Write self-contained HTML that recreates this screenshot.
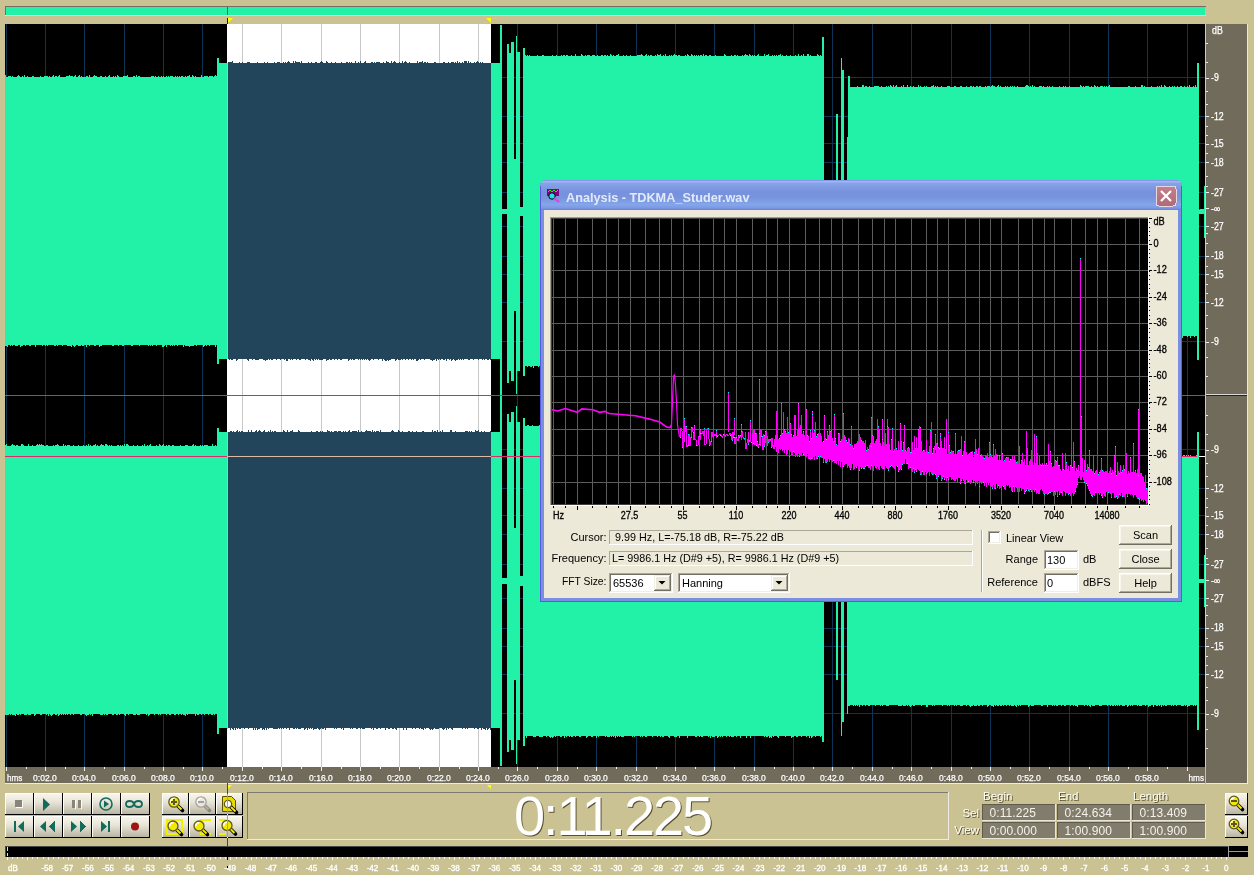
<!DOCTYPE html>
<html><head><meta charset="utf-8"><style>
html,body{margin:0;padding:0;width:1254px;height:875px;overflow:hidden;background:#CAC292;}
svg{position:absolute;left:0;top:0;font-family:"Liberation Sans",sans-serif;will-change:transform;}
</style></head><body>
<svg width="1254" height="875" viewBox="0 0 1254 875" shape-rendering="crispEdges">
<rect x="5" y="6" width="1201" height="1" fill="#7B6A62"/>
<rect x="5" y="6" width="1" height="10" fill="#7B6A62"/>
<rect x="6" y="7" width="1199" height="8" fill="#22F2A8"/>
<rect x="5" y="15" width="1201" height="1" fill="#E2E4E6"/>
<rect x="227" y="7" width="1" height="8" fill="#D0205A"/>
<rect x="227" y="18" width="1" height="6" fill="#0000FF"/>
<polygon shape-rendering="geometricPrecision" points="228,18 233,18 228,23" fill="#FFFF00"/>
<polygon shape-rendering="geometricPrecision" points="486,18 491,18 491,23" fill="#FFFF00"/>
<rect x="5" y="24" width="1200" height="743" fill="#000"/>
<rect x="227" y="24" width="264" height="743" fill="#FFFFFF"/>
<rect x="6" y="24" width="1" height="743" fill="#0F3352"/>
<rect x="45" y="24" width="1" height="743" fill="#0F3352"/>
<rect x="84" y="24" width="1" height="743" fill="#0F3352"/>
<rect x="124" y="24" width="1" height="743" fill="#0F3352"/>
<rect x="163" y="24" width="1" height="743" fill="#0F3352"/>
<rect x="202" y="24" width="1" height="743" fill="#0F3352"/>
<rect x="242" y="24" width="1" height="743" fill="#C8C8C8"/>
<rect x="281" y="24" width="1" height="743" fill="#C8C8C8"/>
<rect x="321" y="24" width="1" height="743" fill="#C8C8C8"/>
<rect x="360" y="24" width="1" height="743" fill="#C8C8C8"/>
<rect x="399" y="24" width="1" height="743" fill="#C8C8C8"/>
<rect x="439" y="24" width="1" height="743" fill="#C8C8C8"/>
<rect x="478" y="24" width="1" height="743" fill="#C8C8C8"/>
<rect x="517" y="24" width="1" height="743" fill="#0F3352"/>
<rect x="557" y="24" width="1" height="743" fill="#0F3352"/>
<rect x="596" y="24" width="1" height="743" fill="#0F3352"/>
<rect x="636" y="24" width="1" height="743" fill="#0F3352"/>
<rect x="675" y="24" width="1" height="743" fill="#0F3352"/>
<rect x="714" y="24" width="1" height="743" fill="#0F3352"/>
<rect x="754" y="24" width="1" height="743" fill="#0F3352"/>
<rect x="793" y="24" width="1" height="743" fill="#0F3352"/>
<rect x="832" y="24" width="1" height="743" fill="#0F3352"/>
<rect x="872" y="24" width="1" height="743" fill="#0F3352"/>
<rect x="911" y="24" width="1" height="743" fill="#0F3352"/>
<rect x="951" y="24" width="1" height="743" fill="#0F3352"/>
<rect x="990" y="24" width="1" height="743" fill="#0F3352"/>
<rect x="1029" y="24" width="1" height="743" fill="#0F3352"/>
<rect x="1069" y="24" width="1" height="743" fill="#0F3352"/>
<rect x="1108" y="24" width="1" height="743" fill="#0F3352"/>
<rect x="1147" y="24" width="1" height="743" fill="#0F3352"/>
<rect x="1187" y="24" width="1" height="743" fill="#0F3352"/>
<rect x="5" y="77" width="1200" height="1" fill="#0F3352"/>
<rect x="5" y="116" width="1200" height="1" fill="#0F3352"/>
<rect x="5" y="143" width="1200" height="1" fill="#0F3352"/>
<rect x="5" y="162" width="1200" height="1" fill="#0F3352"/>
<rect x="5" y="192" width="1200" height="1" fill="#0F3352"/>
<rect x="5" y="226" width="1200" height="1" fill="#0F3352"/>
<rect x="5" y="256" width="1200" height="1" fill="#0F3352"/>
<rect x="5" y="274" width="1200" height="1" fill="#0F3352"/>
<rect x="5" y="302" width="1200" height="1" fill="#0F3352"/>
<rect x="5" y="341" width="1200" height="1" fill="#0F3352"/>
<rect x="5" y="449" width="1200" height="1" fill="#0F3352"/>
<rect x="5" y="488" width="1200" height="1" fill="#0F3352"/>
<rect x="5" y="515" width="1200" height="1" fill="#0F3352"/>
<rect x="5" y="534" width="1200" height="1" fill="#0F3352"/>
<rect x="5" y="564" width="1200" height="1" fill="#0F3352"/>
<rect x="5" y="598" width="1200" height="1" fill="#0F3352"/>
<rect x="5" y="628" width="1200" height="1" fill="#0F3352"/>
<rect x="5" y="646" width="1200" height="1" fill="#0F3352"/>
<rect x="5" y="674" width="1200" height="1" fill="#0F3352"/>
<rect x="5" y="713" width="1200" height="1" fill="#0F3352"/>
<rect x="5" y="77" width="212" height="268" fill="#22F2A8"/>
<rect x="217" y="58" width="2" height="306" fill="#22F2A8"/>
<rect x="219" y="63" width="8" height="296" fill="#22F2A8"/>
<rect x="227" y="63" width="264" height="296" fill="#23455C"/>
<rect x="491" y="63" width="9" height="296" fill="#22F2A8"/>
<rect x="500" y="25" width="2" height="372" fill="#22F2A8"/>
<rect x="502" y="209" width="5" height="5" fill="#22F2A8"/>
<rect x="507" y="44" width="2" height="339" fill="#22F2A8"/>
<rect x="509" y="53" width="2" height="318" fill="#22F2A8"/>
<rect x="511" y="42" width="3" height="339" fill="#22F2A8"/>
<rect x="516" y="52" width="4" height="319" fill="#22F2A8"/>
<rect x="514" y="159" width="2" height="152" fill="#22F2A8"/>
<rect x="516" y="36" width="1" height="358" fill="#22F2A8"/>
<rect x="520" y="207" width="3" height="9" fill="#22F2A8"/>
<rect x="523" y="48" width="2" height="328" fill="#22F2A8"/>
<rect x="525" y="56" width="298" height="310" fill="#22F2A8"/>
<rect x="822" y="37" width="2" height="336" fill="#22F2A8"/>
<rect x="836" y="114" width="2" height="197" fill="#22F2A8"/>
<rect x="841" y="58" width="1" height="308" fill="#22F2A8"/>
<rect x="842" y="70" width="2" height="282" fill="#22F2A8"/>
<rect x="847" y="137" width="1" height="208" fill="#22F2A8"/>
<rect x="848" y="76" width="2" height="260" fill="#22F2A8"/>
<rect x="848" y="87" width="349" height="249" fill="#22F2A8"/>
<rect x="1197" y="63" width="2" height="297" fill="#22F2A8"/>
<rect x="5" y="446" width="212" height="268" fill="#22F2A8"/>
<rect x="217" y="428" width="2" height="306" fill="#22F2A8"/>
<rect x="219" y="432" width="8" height="296" fill="#22F2A8"/>
<rect x="227" y="432" width="264" height="296" fill="#23455C"/>
<rect x="491" y="432" width="9" height="296" fill="#22F2A8"/>
<rect x="500" y="394" width="2" height="372" fill="#22F2A8"/>
<rect x="502" y="578" width="5" height="6" fill="#22F2A8"/>
<rect x="507" y="414" width="2" height="338" fill="#22F2A8"/>
<rect x="509" y="422" width="2" height="318" fill="#22F2A8"/>
<rect x="511" y="412" width="3" height="338" fill="#22F2A8"/>
<rect x="516" y="422" width="4" height="318" fill="#22F2A8"/>
<rect x="514" y="528" width="2" height="152" fill="#22F2A8"/>
<rect x="516" y="406" width="1" height="358" fill="#22F2A8"/>
<rect x="520" y="576" width="3" height="10" fill="#22F2A8"/>
<rect x="523" y="418" width="2" height="328" fill="#22F2A8"/>
<rect x="525" y="426" width="298" height="310" fill="#22F2A8"/>
<rect x="822" y="406" width="2" height="336" fill="#22F2A8"/>
<rect x="836" y="484" width="2" height="196" fill="#22F2A8"/>
<rect x="841" y="428" width="1" height="308" fill="#22F2A8"/>
<rect x="842" y="440" width="2" height="282" fill="#22F2A8"/>
<rect x="847" y="506" width="1" height="208" fill="#22F2A8"/>
<rect x="848" y="446" width="2" height="260" fill="#22F2A8"/>
<rect x="848" y="456" width="349" height="249" fill="#22F2A8"/>
<rect x="1197" y="432" width="2" height="298" fill="#22F2A8"/>
<path shape-rendering="geometricPrecision" d="M5.5 75v2M5.5 345v1M6.5 345v1M7.5 345v2M8.5 76v1M9.5 76v1M10.5 76v1M10.5 345v1M12.5 76v1M12.5 345v1M15.5 345v1M16.5 345v1M17.5 76v1M17.5 345v1M18.5 75v2M19.5 76v1M20.5 345v2M21.5 345v1M22.5 76v1M22.5 345v1M24.5 75v2M25.5 345v1M27.5 76v1M29.5 345v1M30.5 345v1M32.5 76v1M33.5 76v1M35.5 345v2M40.5 76v1M42.5 345v1M44.5 76v1M45.5 76v1M45.5 345v1M46.5 76v1M47.5 76v1M47.5 345v1M49.5 76v1M52.5 76v1M53.5 75v2M54.5 345v1M55.5 76v1M55.5 345v1M56.5 76v1M57.5 345v1M58.5 76v1M59.5 75v2M62.5 345v1M66.5 76v1M67.5 76v1M67.5 345v1M68.5 76v1M68.5 345v1M69.5 75v2M69.5 345v1M70.5 76v1M70.5 345v1M71.5 76v1M71.5 345v2M72.5 76v1M73.5 345v1M74.5 76v1M74.5 345v2M75.5 75v2M75.5 345v1M78.5 76v1M78.5 345v1M79.5 75v2M79.5 345v1M80.5 345v1M81.5 76v1M82.5 345v1M83.5 345v1M86.5 76v1M86.5 345v2M87.5 76v1M89.5 75v2M89.5 345v1M93.5 76v1M94.5 75v2M94.5 345v1M95.5 76v1M95.5 345v1M96.5 76v1M99.5 345v2M100.5 76v1M100.5 345v1M101.5 76v1M101.5 345v1M105.5 76v1M108.5 76v1M109.5 75v2M112.5 345v1M113.5 76v1M113.5 345v1M115.5 76v1M117.5 75v2M118.5 76v1M118.5 345v1M122.5 345v1M123.5 76v1M123.5 345v1M124.5 76v1M125.5 76v1M126.5 76v1M127.5 75v2M131.5 345v1M132.5 345v1M133.5 76v1M134.5 76v1M136.5 75v2M138.5 76v1M139.5 76v1M139.5 345v1M148.5 345v1M150.5 345v1M151.5 76v1M152.5 76v1M152.5 345v1M153.5 76v1M155.5 76v1M156.5 345v1M158.5 76v1M161.5 76v1M162.5 345v2M163.5 76v1M163.5 345v2M164.5 345v1M166.5 76v1M166.5 345v2M168.5 76v1M170.5 76v1M170.5 345v1M171.5 76v1M172.5 76v1M172.5 345v1M174.5 345v1M175.5 76v1M177.5 76v1M177.5 345v1M179.5 76v1M181.5 76v1M182.5 76v1M183.5 345v2M185.5 76v1M185.5 345v1M186.5 345v1M187.5 76v1M187.5 345v1M188.5 76v1M188.5 345v1M189.5 75v2M189.5 345v2M190.5 345v1M191.5 345v1M192.5 75v2M192.5 345v1M193.5 76v1M193.5 345v1M195.5 76v1M196.5 345v1M201.5 75v2M203.5 345v2M204.5 76v1M204.5 345v1M205.5 76v1M206.5 76v1M206.5 345v1M207.5 76v1M209.5 76v1M209.5 345v1M210.5 76v1M211.5 76v1M212.5 76v1M214.5 76v1M215.5 75v2M215.5 345v2M216.5 76v1M525.5 55v1M527.5 55v1M527.5 366v1M529.5 55v1M530.5 366v1M531.5 366v1M533.5 366v2M537.5 55v1M538.5 366v1M540.5 366v1M541.5 366v1M542.5 55v1M543.5 55v1M544.5 366v1M545.5 366v1M547.5 366v1M548.5 366v2M549.5 366v1M552.5 55v1M554.5 366v1M556.5 55v1M556.5 366v2M557.5 366v1M558.5 366v1M559.5 366v1M561.5 55v1M561.5 366v1M562.5 366v2M563.5 55v1M563.5 366v1M564.5 55v1M566.5 55v1M567.5 55v1M568.5 366v2M571.5 55v1M573.5 366v1M575.5 54v2M576.5 366v1M577.5 366v1M578.5 366v1M581.5 54v2M581.5 366v1M582.5 55v1M582.5 366v1M585.5 55v1M585.5 366v1M586.5 366v1M587.5 55v1M587.5 366v2M588.5 55v1M588.5 366v2M589.5 55v1M590.5 366v1M592.5 55v1M593.5 55v1M593.5 366v1M594.5 55v1M596.5 366v1M597.5 55v1M598.5 366v2M601.5 55v1M602.5 55v1M603.5 366v1M604.5 55v1M605.5 55v1M606.5 366v1M607.5 55v1M609.5 366v1M610.5 54v2M610.5 366v2M611.5 55v1M613.5 55v1M616.5 55v1M616.5 366v1M617.5 55v1M617.5 366v1M618.5 54v2M620.5 366v1M623.5 55v1M624.5 366v1M625.5 366v1M626.5 55v1M626.5 366v1M628.5 366v2M629.5 366v2M630.5 55v1M636.5 366v2M637.5 55v1M638.5 55v1M639.5 55v1M639.5 366v1M640.5 55v1M641.5 54v2M641.5 366v1M642.5 55v1M642.5 366v1M645.5 55v1M646.5 54v2M648.5 55v1M650.5 55v1M650.5 366v1M651.5 55v1M651.5 366v1M654.5 366v1M655.5 55v1M655.5 366v1M656.5 366v1M657.5 54v2M658.5 55v1M658.5 366v1M659.5 55v1M660.5 54v2M660.5 366v2M663.5 55v1M665.5 54v2M666.5 366v1M667.5 366v1M668.5 366v1M669.5 55v1M669.5 366v1M671.5 55v1M673.5 55v1M674.5 54v2M675.5 55v1M676.5 55v1M676.5 366v1M678.5 55v1M679.5 55v1M681.5 366v2M683.5 366v1M684.5 366v1M685.5 55v1M685.5 366v1M687.5 54v2M688.5 55v1M691.5 54v2M691.5 366v2M692.5 55v1M694.5 55v1M696.5 55v1M697.5 366v1M698.5 55v1M698.5 366v2M700.5 55v1M700.5 366v1M701.5 55v1M701.5 366v2M702.5 366v1M703.5 54v2M703.5 366v1M705.5 55v1M706.5 55v1M709.5 55v1M710.5 55v1M710.5 366v1M711.5 366v1M715.5 55v1M719.5 366v1M724.5 54v2M725.5 55v1M727.5 366v1M731.5 55v1M734.5 55v1M735.5 55v1M737.5 55v1M742.5 55v1M744.5 55v1M745.5 54v2M745.5 366v1M746.5 55v1M747.5 55v1M749.5 54v2M749.5 366v1M750.5 55v1M752.5 55v1M753.5 366v1M754.5 55v1M757.5 55v1M758.5 54v2M760.5 366v1M761.5 366v1M762.5 366v2M763.5 366v1M764.5 54v2M764.5 366v1M765.5 366v1M766.5 55v1M767.5 55v1M767.5 366v1M768.5 54v2M770.5 366v2M772.5 55v1M774.5 55v1M775.5 366v1M776.5 55v1M777.5 366v1M778.5 55v1M778.5 366v1M779.5 55v1M780.5 54v2M780.5 366v1M782.5 55v1M786.5 55v1M789.5 366v1M790.5 55v1M790.5 366v1M791.5 366v1M792.5 366v1M795.5 55v1M798.5 54v2M799.5 366v1M801.5 55v1M803.5 54v2M805.5 366v1M807.5 54v2M808.5 54v2M810.5 55v1M812.5 366v1M814.5 366v1M817.5 54v2M817.5 366v2M818.5 55v1M820.5 55v1M822.5 55v1M822.5 366v2M848.5 86v1M848.5 336v1M854.5 336v1M856.5 336v1M857.5 86v1M857.5 336v1M859.5 336v2M861.5 336v1M862.5 85v2M863.5 85v2M865.5 86v1M866.5 86v1M866.5 336v1M869.5 86v1M872.5 336v1M873.5 336v1M874.5 86v1M874.5 336v1M875.5 86v1M876.5 86v1M877.5 86v1M878.5 86v1M878.5 336v1M879.5 336v1M880.5 336v1M881.5 86v1M883.5 336v1M886.5 86v1M887.5 336v1M888.5 86v1M889.5 336v1M890.5 85v2M891.5 86v1M892.5 336v1M893.5 85v2M895.5 86v1M896.5 85v2M900.5 336v1M901.5 86v1M903.5 85v2M905.5 336v2M907.5 85v2M909.5 336v1M910.5 86v1M910.5 336v1M913.5 86v1M915.5 336v1M918.5 85v2M918.5 336v1M920.5 86v1M921.5 336v1M923.5 336v1M924.5 86v1M926.5 86v1M927.5 336v1M931.5 86v1M931.5 336v1M932.5 86v1M933.5 85v2M935.5 86v1M935.5 336v1M936.5 336v2M937.5 86v1M938.5 336v1M939.5 336v2M940.5 336v1M941.5 86v1M943.5 336v1M947.5 86v1M947.5 336v1M948.5 86v1M948.5 336v1M949.5 86v1M949.5 336v1M952.5 336v1M954.5 86v1M955.5 86v1M958.5 336v1M960.5 86v1M960.5 336v1M961.5 86v1M961.5 336v2M963.5 336v1M966.5 86v1M966.5 336v1M968.5 336v1M970.5 86v1M970.5 336v2M971.5 86v1M971.5 336v1M972.5 336v1M973.5 86v1M973.5 336v1M974.5 336v1M975.5 336v1M976.5 86v1M977.5 86v1M979.5 86v1M980.5 86v1M982.5 336v2M984.5 336v1M985.5 86v1M985.5 336v1M987.5 86v1M988.5 86v1M989.5 86v1M989.5 336v1M990.5 336v2M991.5 86v1M992.5 85v2M993.5 86v1M994.5 86v1M995.5 336v1M996.5 336v1M997.5 86v1M997.5 336v1M998.5 85v2M1000.5 86v1M1000.5 336v1M1001.5 336v1M1002.5 336v1M1003.5 336v1M1004.5 336v2M1005.5 86v1M1005.5 336v1M1007.5 86v1M1008.5 336v1M1009.5 336v1M1010.5 86v1M1011.5 336v1M1012.5 86v1M1012.5 336v1M1014.5 86v1M1014.5 336v1M1017.5 86v1M1017.5 336v1M1019.5 336v1M1020.5 336v2M1022.5 336v1M1024.5 336v1M1025.5 86v1M1026.5 85v2M1026.5 336v1M1027.5 85v2M1028.5 86v1M1030.5 86v1M1032.5 85v2M1034.5 86v1M1037.5 336v1M1038.5 336v1M1039.5 86v1M1039.5 336v1M1040.5 86v1M1041.5 86v1M1041.5 336v1M1042.5 336v1M1043.5 86v1M1045.5 336v1M1047.5 86v1M1047.5 336v1M1049.5 86v1M1049.5 336v1M1050.5 336v1M1052.5 86v1M1053.5 336v1M1058.5 336v2M1059.5 86v1M1059.5 336v2M1063.5 86v1M1065.5 86v1M1066.5 336v2M1067.5 336v1M1069.5 86v1M1069.5 336v1M1073.5 336v1M1074.5 336v1M1075.5 336v1M1077.5 336v1M1079.5 336v1M1080.5 85v2M1081.5 86v1M1083.5 86v1M1084.5 336v1M1085.5 86v1M1085.5 336v1M1086.5 86v1M1087.5 86v1M1087.5 336v1M1088.5 86v1M1091.5 86v1M1094.5 85v2M1094.5 336v1M1095.5 86v1M1097.5 86v1M1097.5 336v2M1098.5 336v1M1100.5 86v1M1101.5 86v1M1102.5 86v1M1102.5 336v1M1104.5 86v1M1106.5 86v1M1106.5 336v1M1108.5 86v1M1108.5 336v2M1109.5 85v2M1115.5 336v1M1116.5 336v1M1121.5 336v2M1123.5 336v1M1125.5 336v2M1128.5 86v1M1128.5 336v2M1129.5 86v1M1130.5 336v1M1131.5 336v2M1133.5 336v1M1135.5 86v1M1135.5 336v1M1141.5 85v2M1142.5 85v2M1144.5 86v1M1144.5 336v2M1149.5 336v2M1151.5 86v1M1151.5 336v2M1153.5 336v1M1157.5 86v1M1157.5 336v1M1159.5 86v1M1159.5 336v1M1161.5 85v2M1162.5 336v1M1164.5 85v2M1165.5 86v1M1165.5 336v2M1167.5 336v1M1169.5 86v1M1172.5 86v1M1172.5 336v1M1173.5 336v1M1174.5 86v1M1174.5 336v1M1177.5 86v1M1177.5 336v1M1178.5 336v2M1179.5 336v2M1180.5 86v1M1180.5 336v1M1181.5 86v1M1182.5 336v2M1184.5 86v1M1187.5 86v1M1187.5 336v1M1189.5 85v2M1190.5 336v2M1193.5 86v1M1194.5 336v1M1195.5 85v2M5.5 445v1M5.5 714v1M6.5 444v2M6.5 714v1M7.5 714v1M8.5 714v1M10.5 714v1M11.5 445v1M12.5 444v2M12.5 714v1M13.5 445v1M13.5 714v1M14.5 445v1M14.5 714v1M15.5 714v2M16.5 445v1M17.5 445v1M17.5 714v1M18.5 714v1M20.5 714v1M21.5 444v2M22.5 444v2M23.5 445v1M24.5 714v1M25.5 714v1M26.5 714v1M28.5 444v2M28.5 714v1M29.5 714v1M30.5 714v1M32.5 445v1M34.5 714v2M35.5 714v1M36.5 445v1M37.5 444v2M38.5 445v1M39.5 444v2M40.5 445v1M40.5 714v1M41.5 444v2M41.5 714v1M42.5 445v1M43.5 445v1M46.5 445v1M46.5 714v1M47.5 445v1M48.5 714v2M50.5 714v1M51.5 714v2M52.5 714v1M53.5 445v1M55.5 445v1M55.5 714v1M56.5 445v1M56.5 714v1M57.5 444v2M58.5 445v1M58.5 714v2M59.5 714v1M61.5 714v1M63.5 444v2M63.5 714v1M65.5 445v1M65.5 714v1M67.5 445v1M67.5 714v1M68.5 445v1M69.5 445v1M70.5 714v1M73.5 445v1M73.5 714v1M78.5 445v1M80.5 714v1M81.5 714v1M83.5 445v1M85.5 714v1M86.5 445v1M86.5 714v2M87.5 714v1M88.5 444v2M88.5 714v1M90.5 445v1M90.5 714v1M92.5 714v2M93.5 445v1M94.5 445v1M95.5 444v2M97.5 445v1M100.5 445v1M100.5 714v1M101.5 444v2M101.5 714v1M102.5 445v1M102.5 714v1M103.5 445v1M104.5 714v1M105.5 444v2M106.5 444v2M106.5 714v1M107.5 445v1M107.5 714v1M109.5 445v1M111.5 445v1M112.5 714v1M113.5 714v1M116.5 714v1M117.5 445v1M117.5 714v1M118.5 445v1M119.5 714v1M120.5 445v1M122.5 445v1M124.5 444v2M124.5 714v1M125.5 714v2M126.5 444v2M127.5 444v2M128.5 445v1M128.5 714v1M133.5 445v1M133.5 714v1M134.5 714v1M135.5 714v1M137.5 445v1M137.5 714v1M138.5 714v1M139.5 714v1M142.5 445v1M144.5 444v2M146.5 714v1M147.5 445v1M148.5 714v2M149.5 445v1M149.5 714v1M150.5 444v2M154.5 714v1M156.5 445v1M158.5 714v1M159.5 444v2M160.5 445v1M160.5 714v1M162.5 445v1M163.5 444v2M166.5 445v1M166.5 714v1M168.5 445v1M169.5 445v1M169.5 714v1M170.5 714v1M172.5 445v1M173.5 445v1M174.5 714v1M175.5 714v1M178.5 714v1M180.5 445v1M181.5 714v1M183.5 714v1M184.5 714v1M185.5 445v1M185.5 714v2M186.5 445v1M187.5 445v1M187.5 714v1M192.5 445v1M193.5 444v2M195.5 445v1M195.5 714v2M197.5 714v1M198.5 714v1M200.5 445v1M201.5 714v1M202.5 445v1M204.5 445v1M204.5 714v1M205.5 445v1M206.5 445v1M207.5 445v1M208.5 714v1M211.5 714v1M212.5 444v2M212.5 714v1M214.5 714v1M215.5 445v1M526.5 736v2M527.5 425v1M528.5 425v1M532.5 425v1M533.5 736v1M534.5 736v1M535.5 736v1M539.5 425v1M539.5 736v1M540.5 736v1M541.5 736v1M542.5 425v1M542.5 736v1M545.5 425v1M546.5 736v1M547.5 425v1M548.5 425v1M549.5 425v1M549.5 736v1M550.5 736v2M551.5 736v1M552.5 736v2M553.5 736v1M555.5 736v1M556.5 424v2M557.5 425v1M558.5 425v1M560.5 736v1M561.5 736v1M564.5 425v1M564.5 736v2M566.5 736v1M569.5 425v1M569.5 736v1M570.5 425v1M571.5 736v1M572.5 736v1M574.5 424v2M575.5 736v1M576.5 424v2M577.5 425v1M578.5 425v1M579.5 425v1M579.5 736v1M580.5 736v1M583.5 425v1M584.5 425v1M585.5 425v1M586.5 424v2M586.5 736v2M587.5 736v1M588.5 425v1M589.5 424v2M591.5 425v1M591.5 736v1M592.5 736v1M594.5 425v1M595.5 425v1M596.5 736v2M597.5 425v1M598.5 425v1M598.5 736v1M599.5 425v1M601.5 425v1M604.5 425v1M605.5 425v1M605.5 736v1M606.5 425v1M607.5 736v1M608.5 736v1M609.5 736v1M611.5 736v1M612.5 425v1M613.5 736v1M615.5 736v2M617.5 736v1M619.5 736v1M620.5 425v1M621.5 736v1M622.5 424v2M622.5 736v1M623.5 425v1M623.5 736v1M624.5 424v2M629.5 425v1M631.5 425v1M632.5 424v2M632.5 736v1M634.5 736v1M640.5 736v1M642.5 736v1M644.5 425v1M645.5 425v1M645.5 736v1M646.5 736v1M652.5 736v1M654.5 424v2M656.5 425v1M657.5 425v1M657.5 736v1M660.5 424v2M660.5 736v1M661.5 424v2M662.5 736v1M663.5 425v1M663.5 736v1M666.5 425v1M667.5 425v1M668.5 425v1M668.5 736v1M669.5 736v2M670.5 425v1M674.5 736v1M675.5 736v1M676.5 736v1M677.5 425v1M679.5 425v1M679.5 736v2M680.5 425v1M682.5 424v2M684.5 425v1M686.5 424v2M687.5 736v2M690.5 424v2M691.5 425v1M695.5 736v1M696.5 424v2M696.5 736v1M698.5 425v1M699.5 736v1M701.5 736v1M702.5 736v1M708.5 425v1M708.5 736v1M710.5 736v2M711.5 425v1M712.5 736v1M713.5 736v1M714.5 424v2M714.5 736v1M715.5 425v1M717.5 425v1M717.5 736v2M718.5 736v1M719.5 424v2M720.5 425v1M720.5 736v1M722.5 736v1M723.5 425v1M726.5 424v2M726.5 736v1M729.5 736v1M730.5 424v2M731.5 736v1M732.5 736v1M733.5 736v1M735.5 424v2M736.5 425v1M736.5 736v1M737.5 425v1M740.5 425v1M740.5 736v2M745.5 424v2M746.5 736v2M747.5 425v1M750.5 425v1M750.5 736v2M751.5 425v1M755.5 425v1M757.5 425v1M762.5 425v1M764.5 425v1M764.5 736v1M766.5 425v1M766.5 736v1M767.5 425v1M767.5 736v1M769.5 736v2M770.5 736v1M771.5 736v2M772.5 425v1M773.5 425v1M773.5 736v1M774.5 425v1M776.5 425v1M777.5 425v1M777.5 736v1M778.5 736v2M779.5 424v2M780.5 425v1M781.5 425v1M783.5 425v1M784.5 425v1M785.5 736v1M789.5 425v1M791.5 736v2M792.5 736v1M793.5 736v1M796.5 424v2M796.5 736v1M797.5 736v1M798.5 425v1M800.5 425v1M801.5 425v1M801.5 736v1M806.5 425v1M806.5 736v1M807.5 425v1M809.5 425v1M809.5 736v2M810.5 425v1M811.5 736v2M812.5 425v1M812.5 736v1M813.5 424v2M815.5 425v1M815.5 736v1M816.5 425v1M820.5 425v1M820.5 736v1M822.5 425v1M822.5 736v1M848.5 455v1M853.5 455v1M853.5 705v1M854.5 455v1M855.5 454v2M855.5 705v1M857.5 705v1M859.5 455v1M859.5 705v2M862.5 455v1M862.5 705v1M864.5 455v1M865.5 455v1M865.5 705v1M868.5 705v1M869.5 705v1M872.5 455v1M874.5 455v1M875.5 705v1M876.5 455v1M877.5 455v1M880.5 455v1M880.5 705v1M882.5 455v1M882.5 705v1M883.5 455v1M884.5 455v1M886.5 705v1M887.5 455v1M887.5 705v1M888.5 705v1M890.5 455v1M891.5 455v1M892.5 455v1M894.5 455v1M898.5 455v1M898.5 705v1M899.5 705v1M900.5 705v1M901.5 705v1M903.5 705v1M904.5 705v1M905.5 705v1M907.5 454v2M907.5 705v1M909.5 705v1M910.5 454v2M910.5 705v2M911.5 705v1M913.5 705v1M914.5 455v1M914.5 705v1M921.5 705v1M924.5 455v1M926.5 455v1M926.5 705v2M927.5 454v2M927.5 705v2M928.5 455v1M932.5 705v1M933.5 455v1M934.5 455v1M934.5 705v1M936.5 454v2M939.5 455v1M940.5 454v2M941.5 454v2M942.5 705v1M947.5 455v1M947.5 705v1M948.5 455v1M949.5 455v1M949.5 705v1M951.5 455v1M954.5 455v1M954.5 705v1M955.5 455v1M956.5 455v1M956.5 705v1M960.5 454v2M960.5 705v1M961.5 455v1M961.5 705v1M962.5 454v2M962.5 705v1M963.5 455v1M965.5 455v1M966.5 455v1M966.5 705v1M967.5 454v2M969.5 705v1M970.5 705v2M971.5 705v1M972.5 705v1M974.5 705v1M975.5 455v1M975.5 705v1M976.5 705v1M978.5 705v1M979.5 455v1M979.5 705v1M982.5 455v1M982.5 705v1M983.5 455v1M984.5 455v1M985.5 454v2M986.5 455v1M987.5 455v1M987.5 705v2M988.5 705v1M989.5 455v1M990.5 455v1M991.5 705v1M992.5 455v1M992.5 705v1M993.5 705v2M995.5 705v1M997.5 455v1M997.5 705v1M998.5 705v1M1000.5 455v1M1000.5 705v1M1001.5 705v1M1002.5 455v1M1003.5 455v1M1003.5 705v1M1004.5 454v2M1006.5 455v1M1006.5 705v1M1009.5 705v1M1011.5 455v1M1011.5 705v1M1012.5 705v1M1013.5 455v1M1013.5 705v1M1015.5 705v1M1016.5 705v2M1017.5 455v1M1018.5 454v2M1018.5 705v1M1020.5 455v1M1020.5 705v1M1022.5 455v1M1024.5 455v1M1026.5 455v1M1028.5 705v2M1029.5 705v1M1030.5 455v1M1031.5 705v1M1032.5 455v1M1032.5 705v1M1033.5 705v1M1034.5 455v1M1037.5 455v1M1038.5 455v1M1041.5 705v1M1042.5 705v1M1044.5 455v1M1045.5 454v2M1046.5 454v2M1047.5 455v1M1047.5 705v2M1048.5 455v1M1049.5 455v1M1050.5 455v1M1052.5 455v1M1052.5 705v1M1053.5 455v1M1054.5 455v1M1054.5 705v1M1056.5 705v1M1057.5 455v1M1057.5 705v1M1061.5 705v1M1063.5 455v1M1064.5 455v1M1064.5 705v1M1065.5 455v1M1065.5 705v1M1070.5 455v1M1070.5 705v1M1073.5 705v1M1074.5 455v1M1075.5 705v1M1076.5 705v1M1077.5 455v1M1077.5 705v2M1079.5 455v1M1082.5 455v1M1084.5 705v1M1086.5 455v1M1087.5 705v1M1089.5 705v1M1090.5 705v2M1092.5 455v1M1092.5 705v1M1093.5 455v1M1093.5 705v1M1094.5 455v1M1094.5 705v1M1096.5 455v1M1098.5 454v2M1099.5 705v1M1100.5 705v1M1101.5 705v1M1102.5 454v2M1106.5 455v1M1107.5 454v2M1107.5 705v1M1110.5 705v1M1111.5 455v1M1112.5 705v1M1113.5 455v1M1113.5 705v1M1114.5 455v1M1115.5 455v1M1115.5 705v1M1116.5 455v1M1117.5 705v1M1118.5 455v1M1119.5 705v1M1120.5 454v2M1121.5 454v2M1122.5 705v1M1123.5 455v1M1123.5 705v1M1124.5 455v1M1124.5 705v1M1126.5 455v1M1127.5 705v2M1128.5 705v1M1130.5 455v1M1130.5 705v1M1132.5 705v1M1134.5 455v1M1135.5 455v1M1137.5 455v1M1137.5 705v1M1139.5 455v1M1139.5 705v1M1140.5 705v1M1141.5 705v1M1142.5 455v1M1144.5 455v1M1145.5 455v1M1145.5 705v1M1148.5 455v1M1148.5 705v2M1149.5 705v1M1150.5 455v1M1150.5 705v1M1153.5 705v2M1154.5 454v2M1155.5 455v1M1156.5 455v1M1156.5 705v1M1157.5 705v1M1159.5 705v1M1160.5 455v1M1161.5 705v2M1163.5 705v1M1164.5 455v1M1165.5 705v1M1166.5 705v1M1167.5 454v2M1169.5 454v2M1171.5 705v1M1173.5 455v1M1173.5 705v1M1175.5 455v1M1176.5 705v1M1177.5 455v1M1179.5 455v1M1180.5 455v1M1181.5 455v1M1181.5 705v1M1182.5 705v1M1183.5 455v1M1183.5 705v1M1184.5 455v1M1185.5 705v1M1186.5 455v1M1187.5 705v2M1188.5 455v1M1188.5 705v1M1189.5 705v1M1190.5 455v1M1193.5 705v1M1195.5 705v1M1196.5 455v1" stroke="#22F2A8" stroke-width="1" fill="none"/>
<path shape-rendering="geometricPrecision" d="M228.5 62v1M229.5 62v1M229.5 359v1M230.5 62v1M231.5 62v1M231.5 359v1M232.5 61v2M232.5 359v1M236.5 359v2M237.5 359v1M239.5 62v1M242.5 62v1M247.5 62v1M247.5 359v1M248.5 62v1M248.5 359v2M249.5 62v1M252.5 359v1M255.5 359v1M256.5 359v1M257.5 62v1M257.5 359v1M258.5 359v1M263.5 359v1M264.5 62v1M264.5 359v1M265.5 359v2M266.5 359v1M267.5 62v1M267.5 359v1M269.5 359v1M271.5 359v1M272.5 359v1M274.5 62v1M276.5 359v1M277.5 62v1M278.5 62v1M279.5 62v1M280.5 359v1M283.5 62v1M284.5 359v1M285.5 62v1M286.5 359v2M287.5 62v1M287.5 359v2M288.5 61v2M289.5 62v1M290.5 359v1M292.5 359v1M293.5 61v2M295.5 61v2M296.5 62v1M296.5 359v1M297.5 62v1M298.5 62v1M299.5 62v1M299.5 359v1M300.5 359v1M301.5 61v2M305.5 359v1M308.5 62v1M308.5 359v1M309.5 359v1M310.5 359v2M311.5 62v1M312.5 359v1M313.5 359v2M315.5 62v1M315.5 359v1M316.5 62v1M317.5 359v1M319.5 359v1M320.5 62v1M320.5 359v1M321.5 61v2M321.5 359v1M322.5 62v1M322.5 359v1M326.5 61v2M326.5 359v2M327.5 62v1M327.5 359v1M328.5 359v1M330.5 359v1M331.5 62v1M331.5 359v1M334.5 359v1M335.5 62v1M337.5 359v1M340.5 359v1M341.5 62v1M341.5 359v1M346.5 62v1M347.5 62v1M348.5 359v2M349.5 62v1M349.5 359v1M351.5 62v1M351.5 359v1M353.5 359v1M354.5 359v1M355.5 61v2M358.5 62v1M358.5 359v1M360.5 61v2M360.5 359v1M362.5 359v1M364.5 62v1M364.5 359v1M365.5 61v2M366.5 359v1M368.5 359v1M369.5 359v2M370.5 359v1M371.5 62v1M372.5 62v1M373.5 359v1M374.5 62v1M376.5 62v1M377.5 62v1M378.5 62v1M378.5 359v1M379.5 62v1M382.5 359v2M383.5 62v1M384.5 359v1M385.5 359v2M386.5 61v2M386.5 359v2M387.5 62v1M387.5 359v1M388.5 62v1M388.5 359v2M389.5 359v1M390.5 359v1M391.5 61v2M393.5 62v1M394.5 61v2M395.5 62v1M395.5 359v2M396.5 359v1M398.5 359v1M399.5 62v1M399.5 359v1M400.5 359v1M402.5 61v2M402.5 359v1M404.5 62v1M405.5 61v2M405.5 359v1M406.5 62v1M408.5 359v1M409.5 62v1M411.5 359v1M413.5 359v1M416.5 359v2M417.5 61v2M417.5 359v2M418.5 359v1M419.5 62v1M420.5 62v1M420.5 359v1M421.5 62v1M422.5 61v2M424.5 62v1M424.5 359v1M425.5 62v1M427.5 62v1M430.5 359v1M431.5 359v1M432.5 359v2M433.5 359v1M434.5 62v1M434.5 359v1M435.5 62v1M436.5 359v2M438.5 359v1M440.5 359v1M443.5 62v1M443.5 359v1M444.5 62v1M444.5 359v1M446.5 359v2M448.5 62v1M449.5 359v1M451.5 62v1M451.5 359v2M452.5 62v1M452.5 359v1M453.5 62v1M454.5 359v1M455.5 62v1M455.5 359v2M456.5 359v1M457.5 61v2M457.5 359v1M459.5 62v1M459.5 359v1M461.5 359v1M462.5 62v1M463.5 359v1M464.5 61v2M465.5 61v2M466.5 61v2M468.5 61v2M468.5 359v1M469.5 359v1M470.5 62v1M473.5 359v1M474.5 62v1M476.5 62v1M477.5 61v2M478.5 62v1M478.5 359v1M480.5 62v1M482.5 62v1M482.5 359v1M484.5 359v1M487.5 359v1M488.5 359v1M490.5 359v1M227.5 728v1M230.5 431v1M230.5 728v2M231.5 431v1M232.5 728v1M233.5 431v1M233.5 728v2M235.5 728v2M236.5 431v1M237.5 430v2M237.5 728v1M239.5 431v1M239.5 728v1M240.5 728v1M241.5 431v1M242.5 431v1M244.5 728v1M248.5 430v2M248.5 728v1M251.5 430v2M253.5 728v2M255.5 431v1M255.5 728v2M256.5 430v2M257.5 728v2M258.5 431v1M258.5 728v1M259.5 430v2M259.5 728v1M260.5 431v1M262.5 728v2M263.5 431v1M263.5 728v1M264.5 430v2M264.5 728v2M266.5 728v2M268.5 431v1M268.5 728v1M270.5 430v2M272.5 431v1M273.5 728v1M274.5 431v1M274.5 728v1M275.5 431v1M275.5 728v1M276.5 728v1M277.5 728v1M279.5 728v1M281.5 728v1M283.5 430v2M283.5 728v1M284.5 431v1M286.5 728v1M287.5 430v2M289.5 728v2M290.5 431v1M291.5 431v1M292.5 430v2M293.5 728v1M294.5 728v1M296.5 728v1M298.5 430v2M298.5 728v1M299.5 431v1M299.5 728v1M300.5 728v1M304.5 728v2M305.5 728v1M307.5 728v2M309.5 728v1M311.5 431v1M311.5 728v1M313.5 728v2M314.5 728v1M315.5 728v1M316.5 431v1M316.5 728v1M317.5 431v1M318.5 728v1M319.5 728v2M320.5 431v1M320.5 728v1M322.5 431v1M322.5 728v1M323.5 728v1M325.5 728v2M327.5 430v2M328.5 431v1M329.5 431v1M331.5 431v1M334.5 431v1M334.5 728v1M335.5 431v1M336.5 431v1M336.5 728v1M338.5 431v1M339.5 431v1M340.5 431v1M341.5 728v1M343.5 431v1M343.5 728v2M345.5 431v1M348.5 431v1M349.5 430v2M350.5 728v1M352.5 431v1M352.5 728v1M353.5 431v1M354.5 431v1M355.5 431v1M356.5 431v1M356.5 728v1M357.5 728v1M358.5 430v2M360.5 728v1M361.5 431v1M362.5 728v1M363.5 728v1M364.5 728v1M365.5 431v1M366.5 430v2M367.5 431v1M368.5 431v1M369.5 431v1M370.5 431v1M371.5 728v1M372.5 430v2M373.5 728v2M374.5 431v1M376.5 431v1M376.5 728v1M377.5 431v1M377.5 728v1M378.5 431v1M380.5 430v2M380.5 728v1M385.5 728v2M388.5 728v1M389.5 728v1M391.5 431v1M392.5 430v2M392.5 728v1M393.5 431v1M393.5 728v1M395.5 728v1M396.5 728v2M398.5 430v2M399.5 431v1M402.5 431v1M403.5 728v2M406.5 728v2M408.5 431v1M409.5 431v1M412.5 431v1M412.5 728v1M415.5 728v1M416.5 431v1M419.5 728v1M421.5 728v1M422.5 431v1M422.5 728v1M423.5 431v1M423.5 728v2M425.5 728v1M429.5 728v1M430.5 728v2M431.5 728v1M432.5 430v2M432.5 728v2M433.5 728v1M434.5 431v1M435.5 431v1M435.5 728v1M436.5 728v1M437.5 430v2M437.5 728v1M438.5 728v1M440.5 431v1M442.5 430v2M442.5 728v1M443.5 728v2M444.5 728v1M446.5 728v2M448.5 728v1M450.5 430v2M451.5 430v2M451.5 728v1M452.5 728v2M455.5 431v1M462.5 728v1M465.5 431v1M465.5 728v1M466.5 431v1M467.5 431v1M467.5 728v1M469.5 431v1M471.5 431v1M474.5 728v1M475.5 430v2M476.5 431v1M477.5 431v1M477.5 728v1M478.5 430v2M478.5 728v1M481.5 431v1M481.5 728v2M483.5 728v1M484.5 431v1M484.5 728v1M485.5 728v2M487.5 728v2M488.5 728v1M490.5 431v1M490.5 728v2" stroke="#23455C" stroke-width="1" fill="none"/>
<rect x="1199" y="209" width="6" height="5" fill="#22F2A8"/>
<rect x="1204" y="186" width="1" height="52" fill="#22F2A8"/>
<rect x="1199" y="209" width="1" height="1" fill="#E01020"/>
<rect x="1199" y="579" width="6" height="4" fill="#22F2A8"/>
<rect x="1204" y="555" width="1" height="52" fill="#22F2A8"/>
<rect x="227" y="63" width="1" height="296" fill="#D9B48F"/>
<rect x="227" y="432" width="1" height="297" fill="#D9B48F"/>
<rect x="5" y="395" width="1200" height="1" fill="#6E6452"/>
<rect x="5" y="456" width="222" height="1" fill="#E0286A"/>
<rect x="227" y="456" width="264" height="1" fill="#DCBBA3"/>
<rect x="491" y="456" width="49" height="1" fill="#E0286A"/>
<rect x="1182" y="456" width="15" height="1" fill="#E0286A"/>
<rect x="1199" y="456" width="6" height="1" fill="#FFFFFF"/>
<rect x="1205" y="456" width="17" height="1" fill="#9A9A9A"/>
<rect x="1205" y="24" width="43" height="743" fill="#706B5A"/>
<rect x="1205" y="24" width="1" height="743" fill="#D6CEA0"/>
<rect x="1247" y="24" width="1" height="743" fill="#E8E6E0"/>
<rect x="1206" y="394" width="41" height="1" fill="#D8D8D8"/>
<rect x="1206" y="395" width="41" height="1" fill="#222"/>
<text x="1212" y="33.5" font-size="10" fill="#FFFFFF" text-anchor="start" font-weight="normal" textLength="10.76" lengthAdjust="spacingAndGlyphs" stroke="#FFFFFF" stroke-width="0.25">dB</text>
<rect x="1206" y="78" width="3" height="1" fill="#F0F0F0"/>
<text x="1211" y="80.5" font-size="10" fill="#FFFFFF" text-anchor="start" font-weight="normal" textLength="7.82" lengthAdjust="spacingAndGlyphs" stroke="#FFFFFF" stroke-width="0.25">-9</text>
<rect x="1206" y="116" width="3" height="1" fill="#F0F0F0"/>
<text x="1211" y="119.5" font-size="10" fill="#FFFFFF" text-anchor="start" font-weight="normal" textLength="12.72" lengthAdjust="spacingAndGlyphs" stroke="#FFFFFF" stroke-width="0.25">-12</text>
<rect x="1206" y="144" width="3" height="1" fill="#F0F0F0"/>
<text x="1211" y="146.5" font-size="10" fill="#FFFFFF" text-anchor="start" font-weight="normal" textLength="12.72" lengthAdjust="spacingAndGlyphs" stroke="#FFFFFF" stroke-width="0.25">-15</text>
<rect x="1206" y="162" width="3" height="1" fill="#F0F0F0"/>
<text x="1211" y="165.5" font-size="10" fill="#FFFFFF" text-anchor="start" font-weight="normal" textLength="12.72" lengthAdjust="spacingAndGlyphs" stroke="#FFFFFF" stroke-width="0.25">-18</text>
<rect x="1206" y="192" width="3" height="1" fill="#F0F0F0"/>
<text x="1211" y="195.5" font-size="10" fill="#FFFFFF" text-anchor="start" font-weight="normal" textLength="12.72" lengthAdjust="spacingAndGlyphs" stroke="#FFFFFF" stroke-width="0.25">-27</text>
<rect x="1206" y="208" width="3" height="1" fill="#F0F0F0"/>
<text x="1211" y="211.5" font-size="10" fill="#FFFFFF" text-anchor="start" font-weight="normal" textLength="9.20" lengthAdjust="spacingAndGlyphs" stroke="#FFFFFF" stroke-width="0.25">-&#8734;</text>
<rect x="1206" y="226" width="3" height="1" fill="#F0F0F0"/>
<text x="1211" y="229.5" font-size="10" fill="#FFFFFF" text-anchor="start" font-weight="normal" textLength="12.72" lengthAdjust="spacingAndGlyphs" stroke="#FFFFFF" stroke-width="0.25">-27</text>
<rect x="1206" y="256" width="3" height="1" fill="#F0F0F0"/>
<text x="1211" y="258.5" font-size="10" fill="#FFFFFF" text-anchor="start" font-weight="normal" textLength="12.72" lengthAdjust="spacingAndGlyphs" stroke="#FFFFFF" stroke-width="0.25">-18</text>
<rect x="1206" y="274" width="3" height="1" fill="#F0F0F0"/>
<text x="1211" y="277.5" font-size="10" fill="#FFFFFF" text-anchor="start" font-weight="normal" textLength="12.72" lengthAdjust="spacingAndGlyphs" stroke="#FFFFFF" stroke-width="0.25">-15</text>
<rect x="1206" y="302" width="3" height="1" fill="#F0F0F0"/>
<text x="1211" y="305.5" font-size="10" fill="#FFFFFF" text-anchor="start" font-weight="normal" textLength="12.72" lengthAdjust="spacingAndGlyphs" stroke="#FFFFFF" stroke-width="0.25">-12</text>
<rect x="1206" y="342" width="3" height="1" fill="#F0F0F0"/>
<text x="1211" y="344.5" font-size="10" fill="#FFFFFF" text-anchor="start" font-weight="normal" textLength="7.82" lengthAdjust="spacingAndGlyphs" stroke="#FFFFFF" stroke-width="0.25">-9</text>
<rect x="1206" y="450" width="3" height="1" fill="#F0F0F0"/>
<text x="1211" y="452.5" font-size="10" fill="#FFFFFF" text-anchor="start" font-weight="normal" textLength="7.82" lengthAdjust="spacingAndGlyphs" stroke="#FFFFFF" stroke-width="0.25">-9</text>
<rect x="1206" y="488" width="3" height="1" fill="#F0F0F0"/>
<text x="1211" y="491.5" font-size="10" fill="#FFFFFF" text-anchor="start" font-weight="normal" textLength="12.72" lengthAdjust="spacingAndGlyphs" stroke="#FFFFFF" stroke-width="0.25">-12</text>
<rect x="1206" y="516" width="3" height="1" fill="#F0F0F0"/>
<text x="1211" y="518.5" font-size="10" fill="#FFFFFF" text-anchor="start" font-weight="normal" textLength="12.72" lengthAdjust="spacingAndGlyphs" stroke="#FFFFFF" stroke-width="0.25">-15</text>
<rect x="1206" y="534" width="3" height="1" fill="#F0F0F0"/>
<text x="1211" y="537.5" font-size="10" fill="#FFFFFF" text-anchor="start" font-weight="normal" textLength="12.72" lengthAdjust="spacingAndGlyphs" stroke="#FFFFFF" stroke-width="0.25">-18</text>
<rect x="1206" y="564" width="3" height="1" fill="#F0F0F0"/>
<text x="1211" y="567.5" font-size="10" fill="#FFFFFF" text-anchor="start" font-weight="normal" textLength="12.72" lengthAdjust="spacingAndGlyphs" stroke="#FFFFFF" stroke-width="0.25">-27</text>
<rect x="1206" y="580" width="3" height="1" fill="#F0F0F0"/>
<text x="1211" y="583.5" font-size="10" fill="#FFFFFF" text-anchor="start" font-weight="normal" textLength="9.20" lengthAdjust="spacingAndGlyphs" stroke="#FFFFFF" stroke-width="0.25">-&#8734;</text>
<rect x="1206" y="598" width="3" height="1" fill="#F0F0F0"/>
<text x="1211" y="601.5" font-size="10" fill="#FFFFFF" text-anchor="start" font-weight="normal" textLength="12.72" lengthAdjust="spacingAndGlyphs" stroke="#FFFFFF" stroke-width="0.25">-27</text>
<rect x="1206" y="628" width="3" height="1" fill="#F0F0F0"/>
<text x="1211" y="630.5" font-size="10" fill="#FFFFFF" text-anchor="start" font-weight="normal" textLength="12.72" lengthAdjust="spacingAndGlyphs" stroke="#FFFFFF" stroke-width="0.25">-18</text>
<rect x="1206" y="646" width="3" height="1" fill="#F0F0F0"/>
<text x="1211" y="649.5" font-size="10" fill="#FFFFFF" text-anchor="start" font-weight="normal" textLength="12.72" lengthAdjust="spacingAndGlyphs" stroke="#FFFFFF" stroke-width="0.25">-15</text>
<rect x="1206" y="674" width="3" height="1" fill="#F0F0F0"/>
<text x="1211" y="677.5" font-size="10" fill="#FFFFFF" text-anchor="start" font-weight="normal" textLength="12.72" lengthAdjust="spacingAndGlyphs" stroke="#FFFFFF" stroke-width="0.25">-12</text>
<rect x="1206" y="714" width="3" height="1" fill="#F0F0F0"/>
<text x="1211" y="716.5" font-size="10" fill="#FFFFFF" text-anchor="start" font-weight="normal" textLength="7.82" lengthAdjust="spacingAndGlyphs" stroke="#FFFFFF" stroke-width="0.25">-9</text>
<rect x="1206" y="43" width="2" height="1" fill="#E8E8E8"/>
<rect x="1206" y="62" width="2" height="1" fill="#E8E8E8"/>
<rect x="1206" y="91" width="2" height="1" fill="#E8E8E8"/>
<rect x="1206" y="104" width="2" height="1" fill="#E8E8E8"/>
<rect x="1206" y="126" width="2" height="1" fill="#E8E8E8"/>
<rect x="1206" y="135" width="2" height="1" fill="#E8E8E8"/>
<rect x="1206" y="153" width="2" height="1" fill="#E8E8E8"/>
<rect x="1206" y="176" width="2" height="1" fill="#E8E8E8"/>
<rect x="1206" y="186" width="2" height="1" fill="#E8E8E8"/>
<rect x="1206" y="233" width="2" height="1" fill="#E8E8E8"/>
<rect x="1206" y="243" width="2" height="1" fill="#E8E8E8"/>
<rect x="1206" y="266" width="2" height="1" fill="#E8E8E8"/>
<rect x="1206" y="284" width="2" height="1" fill="#E8E8E8"/>
<rect x="1206" y="293" width="2" height="1" fill="#E8E8E8"/>
<rect x="1206" y="315" width="2" height="1" fill="#E8E8E8"/>
<rect x="1206" y="328" width="2" height="1" fill="#E8E8E8"/>
<rect x="1206" y="357" width="2" height="1" fill="#E8E8E8"/>
<rect x="1206" y="376" width="2" height="1" fill="#E8E8E8"/>
<rect x="1206" y="415" width="2" height="1" fill="#E8E8E8"/>
<rect x="1206" y="434" width="2" height="1" fill="#E8E8E8"/>
<rect x="1206" y="463" width="2" height="1" fill="#E8E8E8"/>
<rect x="1206" y="476" width="2" height="1" fill="#E8E8E8"/>
<rect x="1206" y="498" width="2" height="1" fill="#E8E8E8"/>
<rect x="1206" y="507" width="2" height="1" fill="#E8E8E8"/>
<rect x="1206" y="525" width="2" height="1" fill="#E8E8E8"/>
<rect x="1206" y="548" width="2" height="1" fill="#E8E8E8"/>
<rect x="1206" y="558" width="2" height="1" fill="#E8E8E8"/>
<rect x="1206" y="605" width="2" height="1" fill="#E8E8E8"/>
<rect x="1206" y="615" width="2" height="1" fill="#E8E8E8"/>
<rect x="1206" y="638" width="2" height="1" fill="#E8E8E8"/>
<rect x="1206" y="656" width="2" height="1" fill="#E8E8E8"/>
<rect x="1206" y="665" width="2" height="1" fill="#E8E8E8"/>
<rect x="1206" y="687" width="2" height="1" fill="#E8E8E8"/>
<rect x="1206" y="700" width="2" height="1" fill="#E8E8E8"/>
<rect x="1206" y="729" width="2" height="1" fill="#E8E8E8"/>
<rect x="1206" y="748" width="2" height="1" fill="#E8E8E8"/>
<rect x="5" y="767" width="1200" height="16" fill="#706B5A"/>
<rect x="5" y="783" width="1200" height="1" fill="#EDEBE4"/>
<rect x="6" y="767" width="1" height="4" fill="#F0F0F0"/>
<rect x="26" y="767" width="1" height="2" fill="#F0F0F0"/>
<rect x="45" y="767" width="1" height="4" fill="#F0F0F0"/>
<rect x="65" y="767" width="1" height="2" fill="#F0F0F0"/>
<rect x="84" y="767" width="1" height="4" fill="#F0F0F0"/>
<rect x="104" y="767" width="1" height="2" fill="#F0F0F0"/>
<rect x="124" y="767" width="1" height="4" fill="#F0F0F0"/>
<rect x="144" y="767" width="1" height="2" fill="#F0F0F0"/>
<rect x="163" y="767" width="1" height="4" fill="#F0F0F0"/>
<rect x="183" y="767" width="1" height="2" fill="#F0F0F0"/>
<rect x="202" y="767" width="1" height="4" fill="#F0F0F0"/>
<rect x="222" y="767" width="1" height="2" fill="#F0F0F0"/>
<rect x="242" y="767" width="1" height="4" fill="#F0F0F0"/>
<rect x="262" y="767" width="1" height="2" fill="#F0F0F0"/>
<rect x="281" y="767" width="1" height="4" fill="#F0F0F0"/>
<rect x="301" y="767" width="1" height="2" fill="#F0F0F0"/>
<rect x="321" y="767" width="1" height="4" fill="#F0F0F0"/>
<rect x="341" y="767" width="1" height="2" fill="#F0F0F0"/>
<rect x="360" y="767" width="1" height="4" fill="#F0F0F0"/>
<rect x="380" y="767" width="1" height="2" fill="#F0F0F0"/>
<rect x="399" y="767" width="1" height="4" fill="#F0F0F0"/>
<rect x="419" y="767" width="1" height="2" fill="#F0F0F0"/>
<rect x="439" y="767" width="1" height="4" fill="#F0F0F0"/>
<rect x="459" y="767" width="1" height="2" fill="#F0F0F0"/>
<rect x="478" y="767" width="1" height="4" fill="#F0F0F0"/>
<rect x="498" y="767" width="1" height="2" fill="#F0F0F0"/>
<rect x="517" y="767" width="1" height="4" fill="#F0F0F0"/>
<rect x="537" y="767" width="1" height="2" fill="#F0F0F0"/>
<rect x="557" y="767" width="1" height="4" fill="#F0F0F0"/>
<rect x="577" y="767" width="1" height="2" fill="#F0F0F0"/>
<rect x="596" y="767" width="1" height="4" fill="#F0F0F0"/>
<rect x="616" y="767" width="1" height="2" fill="#F0F0F0"/>
<rect x="636" y="767" width="1" height="4" fill="#F0F0F0"/>
<rect x="656" y="767" width="1" height="2" fill="#F0F0F0"/>
<rect x="675" y="767" width="1" height="4" fill="#F0F0F0"/>
<rect x="695" y="767" width="1" height="2" fill="#F0F0F0"/>
<rect x="714" y="767" width="1" height="4" fill="#F0F0F0"/>
<rect x="734" y="767" width="1" height="2" fill="#F0F0F0"/>
<rect x="754" y="767" width="1" height="4" fill="#F0F0F0"/>
<rect x="774" y="767" width="1" height="2" fill="#F0F0F0"/>
<rect x="793" y="767" width="1" height="4" fill="#F0F0F0"/>
<rect x="813" y="767" width="1" height="2" fill="#F0F0F0"/>
<rect x="832" y="767" width="1" height="4" fill="#F0F0F0"/>
<rect x="852" y="767" width="1" height="2" fill="#F0F0F0"/>
<rect x="872" y="767" width="1" height="4" fill="#F0F0F0"/>
<rect x="892" y="767" width="1" height="2" fill="#F0F0F0"/>
<rect x="911" y="767" width="1" height="4" fill="#F0F0F0"/>
<rect x="931" y="767" width="1" height="2" fill="#F0F0F0"/>
<rect x="951" y="767" width="1" height="4" fill="#F0F0F0"/>
<rect x="971" y="767" width="1" height="2" fill="#F0F0F0"/>
<rect x="990" y="767" width="1" height="4" fill="#F0F0F0"/>
<rect x="1010" y="767" width="1" height="2" fill="#F0F0F0"/>
<rect x="1029" y="767" width="1" height="4" fill="#F0F0F0"/>
<rect x="1049" y="767" width="1" height="2" fill="#F0F0F0"/>
<rect x="1069" y="767" width="1" height="4" fill="#F0F0F0"/>
<rect x="1089" y="767" width="1" height="2" fill="#F0F0F0"/>
<rect x="1108" y="767" width="1" height="4" fill="#F0F0F0"/>
<rect x="1128" y="767" width="1" height="2" fill="#F0F0F0"/>
<rect x="1147" y="767" width="1" height="4" fill="#F0F0F0"/>
<rect x="1167" y="767" width="1" height="2" fill="#F0F0F0"/>
<rect x="1187" y="767" width="1" height="4" fill="#F0F0F0"/>
<text x="7" y="781" font-size="9.5" fill="#FFFFFF" text-anchor="start" font-weight="normal" textLength="15.43" lengthAdjust="spacingAndGlyphs" stroke="#FFFFFF" stroke-width="0.25">hms</text>
<text x="44.9" y="781" font-size="9.5" fill="#FFFFFF" text-anchor="middle" font-weight="normal" textLength="23.77" lengthAdjust="spacingAndGlyphs" stroke="#FFFFFF" stroke-width="0.25">0:02.0</text>
<text x="83.9" y="781" font-size="9.5" fill="#FFFFFF" text-anchor="middle" font-weight="normal" textLength="23.77" lengthAdjust="spacingAndGlyphs" stroke="#FFFFFF" stroke-width="0.25">0:04.0</text>
<text x="123.9" y="781" font-size="9.5" fill="#FFFFFF" text-anchor="middle" font-weight="normal" textLength="23.77" lengthAdjust="spacingAndGlyphs" stroke="#FFFFFF" stroke-width="0.25">0:06.0</text>
<text x="162.9" y="781" font-size="9.5" fill="#FFFFFF" text-anchor="middle" font-weight="normal" textLength="23.77" lengthAdjust="spacingAndGlyphs" stroke="#FFFFFF" stroke-width="0.25">0:08.0</text>
<text x="201.9" y="781" font-size="9.5" fill="#FFFFFF" text-anchor="middle" font-weight="normal" textLength="23.77" lengthAdjust="spacingAndGlyphs" stroke="#FFFFFF" stroke-width="0.25">0:10.0</text>
<text x="241.9" y="781" font-size="9.5" fill="#FFFFFF" text-anchor="middle" font-weight="normal" textLength="23.77" lengthAdjust="spacingAndGlyphs" stroke="#FFFFFF" stroke-width="0.25">0:12.0</text>
<text x="280.9" y="781" font-size="9.5" fill="#FFFFFF" text-anchor="middle" font-weight="normal" textLength="23.77" lengthAdjust="spacingAndGlyphs" stroke="#FFFFFF" stroke-width="0.25">0:14.0</text>
<text x="320.9" y="781" font-size="9.5" fill="#FFFFFF" text-anchor="middle" font-weight="normal" textLength="23.77" lengthAdjust="spacingAndGlyphs" stroke="#FFFFFF" stroke-width="0.25">0:16.0</text>
<text x="359.9" y="781" font-size="9.5" fill="#FFFFFF" text-anchor="middle" font-weight="normal" textLength="23.77" lengthAdjust="spacingAndGlyphs" stroke="#FFFFFF" stroke-width="0.25">0:18.0</text>
<text x="398.9" y="781" font-size="9.5" fill="#FFFFFF" text-anchor="middle" font-weight="normal" textLength="23.77" lengthAdjust="spacingAndGlyphs" stroke="#FFFFFF" stroke-width="0.25">0:20.0</text>
<text x="438.9" y="781" font-size="9.5" fill="#FFFFFF" text-anchor="middle" font-weight="normal" textLength="23.77" lengthAdjust="spacingAndGlyphs" stroke="#FFFFFF" stroke-width="0.25">0:22.0</text>
<text x="477.9" y="781" font-size="9.5" fill="#FFFFFF" text-anchor="middle" font-weight="normal" textLength="23.77" lengthAdjust="spacingAndGlyphs" stroke="#FFFFFF" stroke-width="0.25">0:24.0</text>
<text x="516.9" y="781" font-size="9.5" fill="#FFFFFF" text-anchor="middle" font-weight="normal" textLength="23.77" lengthAdjust="spacingAndGlyphs" stroke="#FFFFFF" stroke-width="0.25">0:26.0</text>
<text x="556.9" y="781" font-size="9.5" fill="#FFFFFF" text-anchor="middle" font-weight="normal" textLength="23.77" lengthAdjust="spacingAndGlyphs" stroke="#FFFFFF" stroke-width="0.25">0:28.0</text>
<text x="595.9" y="781" font-size="9.5" fill="#FFFFFF" text-anchor="middle" font-weight="normal" textLength="23.77" lengthAdjust="spacingAndGlyphs" stroke="#FFFFFF" stroke-width="0.25">0:30.0</text>
<text x="635.9" y="781" font-size="9.5" fill="#FFFFFF" text-anchor="middle" font-weight="normal" textLength="23.77" lengthAdjust="spacingAndGlyphs" stroke="#FFFFFF" stroke-width="0.25">0:32.0</text>
<text x="674.9" y="781" font-size="9.5" fill="#FFFFFF" text-anchor="middle" font-weight="normal" textLength="23.77" lengthAdjust="spacingAndGlyphs" stroke="#FFFFFF" stroke-width="0.25">0:34.0</text>
<text x="713.9" y="781" font-size="9.5" fill="#FFFFFF" text-anchor="middle" font-weight="normal" textLength="23.77" lengthAdjust="spacingAndGlyphs" stroke="#FFFFFF" stroke-width="0.25">0:36.0</text>
<text x="753.9" y="781" font-size="9.5" fill="#FFFFFF" text-anchor="middle" font-weight="normal" textLength="23.77" lengthAdjust="spacingAndGlyphs" stroke="#FFFFFF" stroke-width="0.25">0:38.0</text>
<text x="792.9" y="781" font-size="9.5" fill="#FFFFFF" text-anchor="middle" font-weight="normal" textLength="23.77" lengthAdjust="spacingAndGlyphs" stroke="#FFFFFF" stroke-width="0.25">0:40.0</text>
<text x="831.9" y="781" font-size="9.5" fill="#FFFFFF" text-anchor="middle" font-weight="normal" textLength="23.77" lengthAdjust="spacingAndGlyphs" stroke="#FFFFFF" stroke-width="0.25">0:42.0</text>
<text x="871.9" y="781" font-size="9.5" fill="#FFFFFF" text-anchor="middle" font-weight="normal" textLength="23.77" lengthAdjust="spacingAndGlyphs" stroke="#FFFFFF" stroke-width="0.25">0:44.0</text>
<text x="910.9" y="781" font-size="9.5" fill="#FFFFFF" text-anchor="middle" font-weight="normal" textLength="23.77" lengthAdjust="spacingAndGlyphs" stroke="#FFFFFF" stroke-width="0.25">0:46.0</text>
<text x="950.9" y="781" font-size="9.5" fill="#FFFFFF" text-anchor="middle" font-weight="normal" textLength="23.77" lengthAdjust="spacingAndGlyphs" stroke="#FFFFFF" stroke-width="0.25">0:48.0</text>
<text x="989.9" y="781" font-size="9.5" fill="#FFFFFF" text-anchor="middle" font-weight="normal" textLength="23.77" lengthAdjust="spacingAndGlyphs" stroke="#FFFFFF" stroke-width="0.25">0:50.0</text>
<text x="1028.9" y="781" font-size="9.5" fill="#FFFFFF" text-anchor="middle" font-weight="normal" textLength="23.77" lengthAdjust="spacingAndGlyphs" stroke="#FFFFFF" stroke-width="0.25">0:52.0</text>
<text x="1068.9" y="781" font-size="9.5" fill="#FFFFFF" text-anchor="middle" font-weight="normal" textLength="23.77" lengthAdjust="spacingAndGlyphs" stroke="#FFFFFF" stroke-width="0.25">0:54.0</text>
<text x="1107.9" y="781" font-size="9.5" fill="#FFFFFF" text-anchor="middle" font-weight="normal" textLength="23.77" lengthAdjust="spacingAndGlyphs" stroke="#FFFFFF" stroke-width="0.25">0:56.0</text>
<text x="1146.9" y="781" font-size="9.5" fill="#FFFFFF" text-anchor="middle" font-weight="normal" textLength="23.77" lengthAdjust="spacingAndGlyphs" stroke="#FFFFFF" stroke-width="0.25">0:58.0</text>
<text x="1204" y="781" font-size="9.5" fill="#FFFFFF" text-anchor="end" font-weight="normal" textLength="15.43" lengthAdjust="spacingAndGlyphs" stroke="#FFFFFF" stroke-width="0.25">hms</text>
<rect x="1206" y="767" width="42" height="17" fill="#EDEBE4"/>
<rect x="1206" y="767" width="41" height="16" fill="#706B5A"/>
<defs>
<linearGradient id="btn" x1="0" y1="0" x2="0" y2="1">
<stop offset="0" stop-color="#FAF8EE"/><stop offset="0.45" stop-color="#E6E3D6"/><stop offset="1" stop-color="#B9B5A2"/>
</linearGradient>
<linearGradient id="title" x1="0" y1="0" x2="0" y2="1">
<stop offset="0" stop-color="#6E7EE2"/><stop offset="0.04" stop-color="#A4BAF0"/><stop offset="0.12" stop-color="#86A2E8"/><stop offset="0.4" stop-color="#7791DC"/><stop offset="0.6" stop-color="#7894DE"/><stop offset="0.82" stop-color="#84A6EA"/><stop offset="0.93" stop-color="#7C98E6"/><stop offset="1" stop-color="#6C7CE0"/>
</linearGradient>
<linearGradient id="closeb" x1="0" y1="0" x2="0" y2="1">
<stop offset="0" stop-color="#C4808C"/><stop offset="1" stop-color="#B06A78"/>
</linearGradient>
</defs>
<rect x="5" y="793" width="28" height="21" fill="url(#btn)"/>
<rect x="5" y="793" width="28" height="1" fill="#FFFFFA"/>
<rect x="5" y="793" width="1" height="21" fill="#FFFFFA"/>
<rect x="33" y="793" width="1" height="22" fill="#000"/>
<rect x="5" y="814" width="29" height="1" fill="#000"/>
<rect x="5" y="816" width="28" height="21" fill="url(#btn)"/>
<rect x="5" y="816" width="28" height="1" fill="#FFFFFA"/>
<rect x="5" y="816" width="1" height="21" fill="#FFFFFA"/>
<rect x="33" y="816" width="1" height="22" fill="#000"/>
<rect x="5" y="837" width="29" height="1" fill="#000"/>
<rect x="34" y="793" width="28" height="21" fill="url(#btn)"/>
<rect x="34" y="793" width="28" height="1" fill="#FFFFFA"/>
<rect x="34" y="793" width="1" height="21" fill="#FFFFFA"/>
<rect x="62" y="793" width="1" height="22" fill="#000"/>
<rect x="34" y="814" width="29" height="1" fill="#000"/>
<rect x="34" y="816" width="28" height="21" fill="url(#btn)"/>
<rect x="34" y="816" width="28" height="1" fill="#FFFFFA"/>
<rect x="34" y="816" width="1" height="21" fill="#FFFFFA"/>
<rect x="62" y="816" width="1" height="22" fill="#000"/>
<rect x="34" y="837" width="29" height="1" fill="#000"/>
<rect x="63" y="793" width="28" height="21" fill="url(#btn)"/>
<rect x="63" y="793" width="28" height="1" fill="#FFFFFA"/>
<rect x="63" y="793" width="1" height="21" fill="#FFFFFA"/>
<rect x="91" y="793" width="1" height="22" fill="#000"/>
<rect x="63" y="814" width="29" height="1" fill="#000"/>
<rect x="63" y="816" width="28" height="21" fill="url(#btn)"/>
<rect x="63" y="816" width="28" height="1" fill="#FFFFFA"/>
<rect x="63" y="816" width="1" height="21" fill="#FFFFFA"/>
<rect x="91" y="816" width="1" height="22" fill="#000"/>
<rect x="63" y="837" width="29" height="1" fill="#000"/>
<rect x="92" y="793" width="28" height="21" fill="url(#btn)"/>
<rect x="92" y="793" width="28" height="1" fill="#FFFFFA"/>
<rect x="92" y="793" width="1" height="21" fill="#FFFFFA"/>
<rect x="120" y="793" width="1" height="22" fill="#000"/>
<rect x="92" y="814" width="29" height="1" fill="#000"/>
<rect x="92" y="816" width="28" height="21" fill="url(#btn)"/>
<rect x="92" y="816" width="28" height="1" fill="#FFFFFA"/>
<rect x="92" y="816" width="1" height="21" fill="#FFFFFA"/>
<rect x="120" y="816" width="1" height="22" fill="#000"/>
<rect x="92" y="837" width="29" height="1" fill="#000"/>
<rect x="121" y="793" width="28" height="21" fill="url(#btn)"/>
<rect x="121" y="793" width="28" height="1" fill="#FFFFFA"/>
<rect x="121" y="793" width="1" height="21" fill="#FFFFFA"/>
<rect x="149" y="793" width="1" height="22" fill="#000"/>
<rect x="121" y="814" width="29" height="1" fill="#000"/>
<rect x="121" y="816" width="28" height="21" fill="url(#btn)"/>
<rect x="121" y="816" width="28" height="1" fill="#FFFFFA"/>
<rect x="121" y="816" width="1" height="21" fill="#FFFFFA"/>
<rect x="149" y="816" width="1" height="22" fill="#000"/>
<rect x="121" y="837" width="29" height="1" fill="#000"/>
<rect x="15" y="800" width="7" height="7" fill="#8A857A"/>
<rect x="16" y="807" width="7" height="1" fill="#FFFFFF"/>
<rect x="22" y="801" width="1" height="7" fill="#FFFFFF"/>
<polygon shape-rendering="geometricPrecision" points="43,798 50,804.5 43,811" fill="#126B5B"/>
<rect x="72" y="800" width="3" height="8" fill="#8A857A"/>
<rect x="78" y="800" width="3" height="8" fill="#8A857A"/>
<rect x="75" y="800" width="1" height="9" fill="#fff"/>
<rect x="81" y="800" width="1" height="9" fill="#fff"/>
<circle shape-rendering="geometricPrecision" cx="106" cy="804" r="6" fill="none" stroke="#126B5B" stroke-width="1.6"/>
<polygon shape-rendering="geometricPrecision" points="104,800.5 109,804 104,807.5" fill="#126B5B"/>
<path shape-rendering="geometricPrecision" d="M126,804 c0,-4 7,-4 8,0 c1,4 8,4 8,0 c0,-4 -7,-4 -8,0 c-1,4 -8,4 -8,0z" fill="none" stroke="#126B5B" stroke-width="1.8"/>
<rect x="14" y="821" width="2" height="11" fill="#126B5B"/>
<polygon shape-rendering="geometricPrecision" points="24,821 18,826.5 24,832" fill="#126B5B"/>
<polygon shape-rendering="geometricPrecision" points="46,821 40,826.5 46,832" fill="#126B5B"/><polygon points="55,821 49,826.5 55,832" fill="#126B5B"/>
<polygon shape-rendering="geometricPrecision" points="71,821 77,826.5 71,832" fill="#126B5B"/><polygon points="80,821 86,826.5 80,832" fill="#126B5B"/>
<polygon shape-rendering="geometricPrecision" points="101,821 107,826.5 101,832" fill="#126B5B"/>
<rect x="108" y="821" width="2" height="11" fill="#126B5B"/>
<circle shape-rendering="geometricPrecision" cx="135" cy="826.5" r="4" fill="#9E1414"/>
<rect x="162" y="793" width="26" height="21" fill="url(#btn)"/>
<rect x="162" y="793" width="26" height="1" fill="#FFFFFA"/>
<rect x="162" y="793" width="1" height="21" fill="#FFFFFA"/>
<rect x="188" y="793" width="1" height="22" fill="#000"/>
<rect x="162" y="814" width="27" height="1" fill="#000"/>
<rect x="162" y="816" width="26" height="21" fill="url(#btn)"/>
<rect x="162" y="816" width="26" height="1" fill="#FFFFFA"/>
<rect x="162" y="816" width="1" height="21" fill="#FFFFFA"/>
<rect x="188" y="816" width="1" height="22" fill="#000"/>
<rect x="162" y="837" width="27" height="1" fill="#000"/>
<rect x="189" y="793" width="26" height="21" fill="url(#btn)"/>
<rect x="189" y="793" width="26" height="1" fill="#FFFFFA"/>
<rect x="189" y="793" width="1" height="21" fill="#FFFFFA"/>
<rect x="215" y="793" width="1" height="22" fill="#000"/>
<rect x="189" y="814" width="27" height="1" fill="#000"/>
<rect x="189" y="816" width="26" height="21" fill="url(#btn)"/>
<rect x="189" y="816" width="26" height="1" fill="#FFFFFA"/>
<rect x="189" y="816" width="1" height="21" fill="#FFFFFA"/>
<rect x="215" y="816" width="1" height="22" fill="#000"/>
<rect x="189" y="837" width="27" height="1" fill="#000"/>
<rect x="216" y="793" width="26" height="21" fill="url(#btn)"/>
<rect x="216" y="793" width="26" height="1" fill="#FFFFFA"/>
<rect x="216" y="793" width="1" height="21" fill="#FFFFFA"/>
<rect x="242" y="793" width="1" height="22" fill="#000"/>
<rect x="216" y="814" width="27" height="1" fill="#000"/>
<rect x="216" y="816" width="26" height="21" fill="url(#btn)"/>
<rect x="216" y="816" width="26" height="1" fill="#FFFFFA"/>
<rect x="216" y="816" width="1" height="21" fill="#FFFFFA"/>
<rect x="242" y="816" width="1" height="22" fill="#000"/>
<rect x="216" y="837" width="27" height="1" fill="#000"/>
<line shape-rendering="geometricPrecision" x1="177" y1="805" x2="182.5" y2="810.5" stroke="#000" stroke-width="3.6" stroke-linecap="round"/>
<line shape-rendering="geometricPrecision" x1="177" y1="805" x2="181.5" y2="809.5" stroke="#F0E800" stroke-width="2"/>
<circle shape-rendering="geometricPrecision" cx="174" cy="802" r="5.2" fill="#F2E800" stroke="#5E5820" stroke-width="1.3"/>
<path shape-rendering="geometricPrecision" d="M170.60000000000002,802.5 A3.4000000000000004,3.4000000000000004 0 0 1 174.5,798.5999999999999" stroke="#FFFFFF" stroke-width="1.6" fill="none"/>
<rect x="171" y="801" width="6" height="2" fill="#5E5820"/>
<rect x="173" y="799" width="2" height="6" fill="#5E5820"/>
<line shape-rendering="geometricPrecision" x1="204" y1="805" x2="209.5" y2="810.5" stroke="#8A8880" stroke-width="3.6" stroke-linecap="round"/>
<line shape-rendering="geometricPrecision" x1="204" y1="805" x2="208.5" y2="809.5" stroke="#B0AEA8" stroke-width="2"/>
<circle shape-rendering="geometricPrecision" cx="201" cy="802" r="5.2" fill="#E8E6DE" stroke="#A4A29C" stroke-width="1.3"/>
<path shape-rendering="geometricPrecision" d="M197.60000000000002,802.5 A3.4000000000000004,3.4000000000000004 0 0 1 201.5,798.5999999999999" stroke="#FFFFFF" stroke-width="1.6" fill="none"/>
<rect x="198" y="801" width="6" height="2" fill="#A4A29C"/>
<polygon shape-rendering="geometricPrecision" points="222.5,796.5 231.5,796.5 235.5,800.5 235.5,811.5 222.5,811.5" fill="#E8DC00" stroke="#5A5000" stroke-width="1"/>
<line shape-rendering="geometricPrecision" x1="231" y1="807" x2="236.5" y2="812.5" stroke="#000" stroke-width="3.6" stroke-linecap="round"/>
<line shape-rendering="geometricPrecision" x1="231" y1="807" x2="235.5" y2="811.5" stroke="#F0E800" stroke-width="2"/>
<circle shape-rendering="geometricPrecision" cx="228" cy="804" r="3.6" fill="#FFFFFF" stroke="#5E5820" stroke-width="1.3"/>
<path shape-rendering="geometricPrecision" d="M226.20000000000002,804.5 A1.8,1.8 0 0 1 228.5,802.1999999999999" stroke="#FFFFFF" stroke-width="1.6" fill="none"/>
<rect x="167" y="820" width="15" height="14" fill="none" stroke="#F4F000" stroke-width="1.6"/>
<line shape-rendering="geometricPrecision" x1="176" y1="829" x2="181.5" y2="834.5" stroke="#000" stroke-width="3.6" stroke-linecap="round"/>
<line shape-rendering="geometricPrecision" x1="176" y1="829" x2="180.5" y2="833.5" stroke="#F0E800" stroke-width="2"/>
<circle shape-rendering="geometricPrecision" cx="173" cy="826" r="5" fill="#F2E800" stroke="#5E5820" stroke-width="1.3"/>
<path shape-rendering="geometricPrecision" d="M169.8,826.5 A3.2,3.2 0 0 1 173.5,822.8" stroke="#FFFFFF" stroke-width="1.6" fill="none"/>
<path d="M200,820 H211 M200.5,820 V834 M200,834 H211" stroke="#F4F000" stroke-width="1.6" fill="none"/>
<line shape-rendering="geometricPrecision" x1="202" y1="829" x2="207.5" y2="834.5" stroke="#000" stroke-width="3.6" stroke-linecap="round"/>
<line shape-rendering="geometricPrecision" x1="202" y1="829" x2="206.5" y2="833.5" stroke="#F0E800" stroke-width="2"/>
<circle shape-rendering="geometricPrecision" cx="199" cy="826" r="5" fill="#F2E800" stroke="#5E5820" stroke-width="1.3"/>
<path shape-rendering="geometricPrecision" d="M195.8,826.5 A3.2,3.2 0 0 1 199.5,822.8" stroke="#FFFFFF" stroke-width="1.6" fill="none"/>
<path d="M219,820 H226 M225.5,820 V834 M219,834 H226" stroke="#F4F000" stroke-width="1.6" fill="none"/>
<line shape-rendering="geometricPrecision" x1="230" y1="828.5" x2="235.5" y2="834.0" stroke="#000" stroke-width="3.6" stroke-linecap="round"/>
<line shape-rendering="geometricPrecision" x1="230" y1="828.5" x2="234.5" y2="833.0" stroke="#F0E800" stroke-width="2"/>
<circle shape-rendering="geometricPrecision" cx="227" cy="825.5" r="5" fill="#F2E800" stroke="#5E5820" stroke-width="1.3"/>
<path shape-rendering="geometricPrecision" d="M223.8,826.0 A3.2,3.2 0 0 1 227.5,822.3" stroke="#FFFFFF" stroke-width="1.6" fill="none"/>
<rect x="247" y="792" width="702" height="48" fill="#EDEBE4"/>
<rect x="247" y="792" width="701" height="1" fill="#7A7A72"/>
<rect x="247" y="792" width="1" height="47" fill="#7A7A72"/>
<rect x="248" y="793" width="700" height="46" fill="#CAC292"/>
<text x="515" y="836" font-size="56" fill="#5A5030" font-family="Liberation Sans" letter-spacing="-2.1">0:11.225</text>
<text x="514" y="835" font-size="56" fill="#FFFFFF" font-family="Liberation Sans" letter-spacing="-2.1">0:11.225</text>
<text x="984" y="801" font-size="11.5" fill="#5A5238" text-anchor="start">Begin</text>
<text x="983" y="800" font-size="11.5" fill="#FFFFF6" text-anchor="start">Begin</text>
<text x="1059" y="801" font-size="11.5" fill="#5A5238" text-anchor="start">End</text>
<text x="1058" y="800" font-size="11.5" fill="#FFFFF6" text-anchor="start">End</text>
<text x="1134" y="801" font-size="11.5" fill="#5A5238" text-anchor="start">Length</text>
<text x="1133" y="800" font-size="11.5" fill="#FFFFF6" text-anchor="start">Length</text>
<text x="980" y="818" font-size="11.5" fill="#5A5238" text-anchor="end">Sel</text>
<text x="979" y="817" font-size="11.5" fill="#FFFFF6" text-anchor="end">Sel</text>
<text x="980" y="835" font-size="11.5" fill="#5A5238" text-anchor="end">View</text>
<text x="979" y="834" font-size="11.5" fill="#FFFFF6" text-anchor="end">View</text>
<rect x="982" y="804" width="74" height="17" fill="#EAE6D4"/>
<rect x="982" y="804" width="73" height="16" fill="#5E5A4C"/>
<rect x="983" y="805" width="72" height="15" fill="#817C6C"/>
<text x="989.5" y="817" font-size="12" fill="#F4F2EA" text-anchor="start" font-weight="normal" letter-spacing="0.1">0:11.225</text>
<rect x="1057" y="804" width="74" height="17" fill="#EAE6D4"/>
<rect x="1057" y="804" width="73" height="16" fill="#5E5A4C"/>
<rect x="1058" y="805" width="72" height="15" fill="#817C6C"/>
<text x="1064.5" y="817" font-size="12" fill="#F4F2EA" text-anchor="start" font-weight="normal" letter-spacing="0.1">0:24.634</text>
<rect x="1132" y="804" width="74" height="17" fill="#EAE6D4"/>
<rect x="1132" y="804" width="73" height="16" fill="#5E5A4C"/>
<rect x="1133" y="805" width="72" height="15" fill="#817C6C"/>
<text x="1139.5" y="817" font-size="12" fill="#F4F2EA" text-anchor="start" font-weight="normal" letter-spacing="0.1">0:13.409</text>
<rect x="982" y="822" width="74" height="17" fill="#EAE6D4"/>
<rect x="982" y="822" width="73" height="16" fill="#5E5A4C"/>
<rect x="983" y="823" width="72" height="15" fill="#817C6C"/>
<text x="989.5" y="835" font-size="12" fill="#F4F2EA" text-anchor="start" font-weight="normal" letter-spacing="0.1">0:00.000</text>
<rect x="1057" y="822" width="74" height="17" fill="#EAE6D4"/>
<rect x="1057" y="822" width="73" height="16" fill="#5E5A4C"/>
<rect x="1058" y="823" width="72" height="15" fill="#817C6C"/>
<text x="1064.5" y="835" font-size="12" fill="#F4F2EA" text-anchor="start" font-weight="normal" letter-spacing="0.1">1:00.900</text>
<rect x="1132" y="822" width="74" height="17" fill="#EAE6D4"/>
<rect x="1132" y="822" width="73" height="16" fill="#5E5A4C"/>
<rect x="1133" y="823" width="72" height="15" fill="#817C6C"/>
<text x="1139.5" y="835" font-size="12" fill="#F4F2EA" text-anchor="start" font-weight="normal" letter-spacing="0.1">1:00.900</text>
<rect x="1225" y="793" width="22" height="21" fill="url(#btn)"/>
<rect x="1225" y="793" width="22" height="1" fill="#FFFFFA"/>
<rect x="1225" y="793" width="1" height="21" fill="#FFFFFA"/>
<rect x="1247" y="793" width="1" height="22" fill="#000"/>
<rect x="1225" y="814" width="23" height="1" fill="#000"/>
<rect x="1225" y="816" width="22" height="21" fill="url(#btn)"/>
<rect x="1225" y="816" width="22" height="1" fill="#FFFFFA"/>
<rect x="1225" y="816" width="1" height="21" fill="#FFFFFA"/>
<rect x="1247" y="816" width="1" height="22" fill="#000"/>
<rect x="1225" y="837" width="23" height="1" fill="#000"/>
<line shape-rendering="geometricPrecision" x1="1237" y1="804" x2="1242.5" y2="809.5" stroke="#000" stroke-width="3.6" stroke-linecap="round"/>
<line shape-rendering="geometricPrecision" x1="1237" y1="804" x2="1241.5" y2="808.5" stroke="#F0E800" stroke-width="2"/>
<circle shape-rendering="geometricPrecision" cx="1234" cy="801" r="4.8" fill="#F2E800" stroke="#5E5820" stroke-width="1.3"/>
<path shape-rendering="geometricPrecision" d="M1231.0,801.5 A3.0,3.0 0 0 1 1234.5,798.0" stroke="#FFFFFF" stroke-width="1.6" fill="none"/>
<rect x="1231" y="800" width="6" height="2" fill="#5E5820"/>
<line shape-rendering="geometricPrecision" x1="1237" y1="827" x2="1242.5" y2="832.5" stroke="#000" stroke-width="3.6" stroke-linecap="round"/>
<line shape-rendering="geometricPrecision" x1="1237" y1="827" x2="1241.5" y2="831.5" stroke="#F0E800" stroke-width="2"/>
<circle shape-rendering="geometricPrecision" cx="1234" cy="824" r="4.8" fill="#F2E800" stroke="#5E5820" stroke-width="1.3"/>
<path shape-rendering="geometricPrecision" d="M1231.0,824.5 A3.0,3.0 0 0 1 1234.5,821.0" stroke="#FFFFFF" stroke-width="1.6" fill="none"/>
<rect x="1231" y="823" width="6" height="2" fill="#5E5820"/>
<rect x="1233" y="821" width="2" height="6" fill="#5E5820"/>
<rect x="5" y="846" width="1223" height="11" fill="#000"/>
<rect x="5" y="846" width="1" height="11" fill="#4A4A4A"/>
<rect x="5" y="846" width="1223" height="1" fill="#4A4A4A"/>
<rect x="7" y="847" width="1" height="4" fill="#FFFF00"/>
<rect x="7" y="853" width="1" height="3" fill="#FFFF00"/>
<rect x="1229" y="846" width="19" height="5" fill="#000"/>
<rect x="1229" y="852" width="19" height="5" fill="#000"/>
<rect x="1228" y="846" width="1" height="11" fill="#9A9A9A"/>
<rect x="1229" y="851" width="19" height="1" fill="#9A9A9A"/>
<rect x="7" y="857" width="1" height="3" fill="#F6F6F6"/>
<rect x="12" y="857" width="1" height="2" fill="#F6F6F6"/>
<rect x="17" y="857" width="1" height="2" fill="#F6F6F6"/>
<rect x="22" y="857" width="1" height="2" fill="#F6F6F6"/>
<rect x="27" y="857" width="1" height="3" fill="#F6F6F6"/>
<rect x="32" y="857" width="1" height="2" fill="#F6F6F6"/>
<rect x="37" y="857" width="1" height="2" fill="#F6F6F6"/>
<rect x="43" y="857" width="1" height="2" fill="#F6F6F6"/>
<rect x="48" y="857" width="1" height="3" fill="#F6F6F6"/>
<rect x="53" y="857" width="1" height="2" fill="#F6F6F6"/>
<rect x="58" y="857" width="1" height="2" fill="#F6F6F6"/>
<rect x="63" y="857" width="1" height="2" fill="#F6F6F6"/>
<rect x="68" y="857" width="1" height="3" fill="#F6F6F6"/>
<rect x="73" y="857" width="1" height="2" fill="#F6F6F6"/>
<rect x="78" y="857" width="1" height="2" fill="#F6F6F6"/>
<rect x="83" y="857" width="1" height="2" fill="#F6F6F6"/>
<rect x="88" y="857" width="1" height="3" fill="#F6F6F6"/>
<rect x="93" y="857" width="1" height="2" fill="#F6F6F6"/>
<rect x="98" y="857" width="1" height="2" fill="#F6F6F6"/>
<rect x="104" y="857" width="1" height="2" fill="#F6F6F6"/>
<rect x="109" y="857" width="1" height="3" fill="#F6F6F6"/>
<rect x="114" y="857" width="1" height="2" fill="#F6F6F6"/>
<rect x="119" y="857" width="1" height="2" fill="#F6F6F6"/>
<rect x="124" y="857" width="1" height="2" fill="#F6F6F6"/>
<rect x="129" y="857" width="1" height="3" fill="#F6F6F6"/>
<rect x="134" y="857" width="1" height="2" fill="#F6F6F6"/>
<rect x="139" y="857" width="1" height="2" fill="#F6F6F6"/>
<rect x="144" y="857" width="1" height="2" fill="#F6F6F6"/>
<rect x="149" y="857" width="1" height="3" fill="#F6F6F6"/>
<rect x="154" y="857" width="1" height="2" fill="#F6F6F6"/>
<rect x="159" y="857" width="1" height="2" fill="#F6F6F6"/>
<rect x="164" y="857" width="1" height="2" fill="#F6F6F6"/>
<rect x="170" y="857" width="1" height="3" fill="#F6F6F6"/>
<rect x="175" y="857" width="1" height="2" fill="#F6F6F6"/>
<rect x="180" y="857" width="1" height="2" fill="#F6F6F6"/>
<rect x="185" y="857" width="1" height="2" fill="#F6F6F6"/>
<rect x="190" y="857" width="1" height="3" fill="#F6F6F6"/>
<rect x="195" y="857" width="1" height="2" fill="#F6F6F6"/>
<rect x="200" y="857" width="1" height="2" fill="#F6F6F6"/>
<rect x="205" y="857" width="1" height="2" fill="#F6F6F6"/>
<rect x="210" y="857" width="1" height="3" fill="#F6F6F6"/>
<rect x="215" y="857" width="1" height="2" fill="#F6F6F6"/>
<rect x="220" y="857" width="1" height="2" fill="#F6F6F6"/>
<rect x="225" y="857" width="1" height="2" fill="#F6F6F6"/>
<rect x="230" y="857" width="1" height="3" fill="#F6F6F6"/>
<rect x="236" y="857" width="1" height="2" fill="#F6F6F6"/>
<rect x="241" y="857" width="1" height="2" fill="#F6F6F6"/>
<rect x="246" y="857" width="1" height="2" fill="#F6F6F6"/>
<rect x="251" y="857" width="1" height="3" fill="#F6F6F6"/>
<rect x="256" y="857" width="1" height="2" fill="#F6F6F6"/>
<rect x="261" y="857" width="1" height="2" fill="#F6F6F6"/>
<rect x="266" y="857" width="1" height="2" fill="#F6F6F6"/>
<rect x="271" y="857" width="1" height="3" fill="#F6F6F6"/>
<rect x="276" y="857" width="1" height="2" fill="#F6F6F6"/>
<rect x="281" y="857" width="1" height="2" fill="#F6F6F6"/>
<rect x="286" y="857" width="1" height="2" fill="#F6F6F6"/>
<rect x="291" y="857" width="1" height="3" fill="#F6F6F6"/>
<rect x="297" y="857" width="1" height="2" fill="#F6F6F6"/>
<rect x="302" y="857" width="1" height="2" fill="#F6F6F6"/>
<rect x="307" y="857" width="1" height="2" fill="#F6F6F6"/>
<rect x="312" y="857" width="1" height="3" fill="#F6F6F6"/>
<rect x="317" y="857" width="1" height="2" fill="#F6F6F6"/>
<rect x="322" y="857" width="1" height="2" fill="#F6F6F6"/>
<rect x="327" y="857" width="1" height="2" fill="#F6F6F6"/>
<rect x="332" y="857" width="1" height="3" fill="#F6F6F6"/>
<rect x="337" y="857" width="1" height="2" fill="#F6F6F6"/>
<rect x="342" y="857" width="1" height="2" fill="#F6F6F6"/>
<rect x="347" y="857" width="1" height="2" fill="#F6F6F6"/>
<rect x="352" y="857" width="1" height="3" fill="#F6F6F6"/>
<rect x="357" y="857" width="1" height="2" fill="#F6F6F6"/>
<rect x="363" y="857" width="1" height="2" fill="#F6F6F6"/>
<rect x="368" y="857" width="1" height="2" fill="#F6F6F6"/>
<rect x="373" y="857" width="1" height="3" fill="#F6F6F6"/>
<rect x="378" y="857" width="1" height="2" fill="#F6F6F6"/>
<rect x="383" y="857" width="1" height="2" fill="#F6F6F6"/>
<rect x="388" y="857" width="1" height="2" fill="#F6F6F6"/>
<rect x="393" y="857" width="1" height="3" fill="#F6F6F6"/>
<rect x="398" y="857" width="1" height="2" fill="#F6F6F6"/>
<rect x="403" y="857" width="1" height="2" fill="#F6F6F6"/>
<rect x="408" y="857" width="1" height="2" fill="#F6F6F6"/>
<rect x="413" y="857" width="1" height="3" fill="#F6F6F6"/>
<rect x="418" y="857" width="1" height="2" fill="#F6F6F6"/>
<rect x="423" y="857" width="1" height="2" fill="#F6F6F6"/>
<rect x="429" y="857" width="1" height="2" fill="#F6F6F6"/>
<rect x="434" y="857" width="1" height="3" fill="#F6F6F6"/>
<rect x="439" y="857" width="1" height="2" fill="#F6F6F6"/>
<rect x="444" y="857" width="1" height="2" fill="#F6F6F6"/>
<rect x="449" y="857" width="1" height="2" fill="#F6F6F6"/>
<rect x="454" y="857" width="1" height="3" fill="#F6F6F6"/>
<rect x="459" y="857" width="1" height="2" fill="#F6F6F6"/>
<rect x="464" y="857" width="1" height="2" fill="#F6F6F6"/>
<rect x="469" y="857" width="1" height="2" fill="#F6F6F6"/>
<rect x="474" y="857" width="1" height="3" fill="#F6F6F6"/>
<rect x="479" y="857" width="1" height="2" fill="#F6F6F6"/>
<rect x="484" y="857" width="1" height="2" fill="#F6F6F6"/>
<rect x="490" y="857" width="1" height="2" fill="#F6F6F6"/>
<rect x="495" y="857" width="1" height="3" fill="#F6F6F6"/>
<rect x="500" y="857" width="1" height="2" fill="#F6F6F6"/>
<rect x="505" y="857" width="1" height="2" fill="#F6F6F6"/>
<rect x="510" y="857" width="1" height="2" fill="#F6F6F6"/>
<rect x="515" y="857" width="1" height="3" fill="#F6F6F6"/>
<rect x="520" y="857" width="1" height="2" fill="#F6F6F6"/>
<rect x="525" y="857" width="1" height="2" fill="#F6F6F6"/>
<rect x="530" y="857" width="1" height="2" fill="#F6F6F6"/>
<rect x="535" y="857" width="1" height="3" fill="#F6F6F6"/>
<rect x="540" y="857" width="1" height="2" fill="#F6F6F6"/>
<rect x="545" y="857" width="1" height="2" fill="#F6F6F6"/>
<rect x="550" y="857" width="1" height="2" fill="#F6F6F6"/>
<rect x="556" y="857" width="1" height="3" fill="#F6F6F6"/>
<rect x="561" y="857" width="1" height="2" fill="#F6F6F6"/>
<rect x="566" y="857" width="1" height="2" fill="#F6F6F6"/>
<rect x="571" y="857" width="1" height="2" fill="#F6F6F6"/>
<rect x="576" y="857" width="1" height="3" fill="#F6F6F6"/>
<rect x="581" y="857" width="1" height="2" fill="#F6F6F6"/>
<rect x="586" y="857" width="1" height="2" fill="#F6F6F6"/>
<rect x="591" y="857" width="1" height="2" fill="#F6F6F6"/>
<rect x="596" y="857" width="1" height="3" fill="#F6F6F6"/>
<rect x="601" y="857" width="1" height="2" fill="#F6F6F6"/>
<rect x="606" y="857" width="1" height="2" fill="#F6F6F6"/>
<rect x="611" y="857" width="1" height="2" fill="#F6F6F6"/>
<rect x="616" y="857" width="1" height="3" fill="#F6F6F6"/>
<rect x="622" y="857" width="1" height="2" fill="#F6F6F6"/>
<rect x="627" y="857" width="1" height="2" fill="#F6F6F6"/>
<rect x="632" y="857" width="1" height="2" fill="#F6F6F6"/>
<rect x="637" y="857" width="1" height="3" fill="#F6F6F6"/>
<rect x="642" y="857" width="1" height="2" fill="#F6F6F6"/>
<rect x="647" y="857" width="1" height="2" fill="#F6F6F6"/>
<rect x="652" y="857" width="1" height="2" fill="#F6F6F6"/>
<rect x="657" y="857" width="1" height="3" fill="#F6F6F6"/>
<rect x="662" y="857" width="1" height="2" fill="#F6F6F6"/>
<rect x="667" y="857" width="1" height="2" fill="#F6F6F6"/>
<rect x="672" y="857" width="1" height="2" fill="#F6F6F6"/>
<rect x="677" y="857" width="1" height="3" fill="#F6F6F6"/>
<rect x="683" y="857" width="1" height="2" fill="#F6F6F6"/>
<rect x="688" y="857" width="1" height="2" fill="#F6F6F6"/>
<rect x="693" y="857" width="1" height="2" fill="#F6F6F6"/>
<rect x="698" y="857" width="1" height="3" fill="#F6F6F6"/>
<rect x="703" y="857" width="1" height="2" fill="#F6F6F6"/>
<rect x="708" y="857" width="1" height="2" fill="#F6F6F6"/>
<rect x="713" y="857" width="1" height="2" fill="#F6F6F6"/>
<rect x="718" y="857" width="1" height="3" fill="#F6F6F6"/>
<rect x="723" y="857" width="1" height="2" fill="#F6F6F6"/>
<rect x="728" y="857" width="1" height="2" fill="#F6F6F6"/>
<rect x="733" y="857" width="1" height="2" fill="#F6F6F6"/>
<rect x="738" y="857" width="1" height="3" fill="#F6F6F6"/>
<rect x="743" y="857" width="1" height="2" fill="#F6F6F6"/>
<rect x="749" y="857" width="1" height="2" fill="#F6F6F6"/>
<rect x="754" y="857" width="1" height="2" fill="#F6F6F6"/>
<rect x="759" y="857" width="1" height="3" fill="#F6F6F6"/>
<rect x="764" y="857" width="1" height="2" fill="#F6F6F6"/>
<rect x="769" y="857" width="1" height="2" fill="#F6F6F6"/>
<rect x="774" y="857" width="1" height="2" fill="#F6F6F6"/>
<rect x="779" y="857" width="1" height="3" fill="#F6F6F6"/>
<rect x="784" y="857" width="1" height="2" fill="#F6F6F6"/>
<rect x="789" y="857" width="1" height="2" fill="#F6F6F6"/>
<rect x="794" y="857" width="1" height="2" fill="#F6F6F6"/>
<rect x="799" y="857" width="1" height="3" fill="#F6F6F6"/>
<rect x="804" y="857" width="1" height="2" fill="#F6F6F6"/>
<rect x="810" y="857" width="1" height="2" fill="#F6F6F6"/>
<rect x="815" y="857" width="1" height="2" fill="#F6F6F6"/>
<rect x="820" y="857" width="1" height="3" fill="#F6F6F6"/>
<rect x="825" y="857" width="1" height="2" fill="#F6F6F6"/>
<rect x="830" y="857" width="1" height="2" fill="#F6F6F6"/>
<rect x="835" y="857" width="1" height="2" fill="#F6F6F6"/>
<rect x="840" y="857" width="1" height="3" fill="#F6F6F6"/>
<rect x="845" y="857" width="1" height="2" fill="#F6F6F6"/>
<rect x="850" y="857" width="1" height="2" fill="#F6F6F6"/>
<rect x="855" y="857" width="1" height="2" fill="#F6F6F6"/>
<rect x="860" y="857" width="1" height="3" fill="#F6F6F6"/>
<rect x="865" y="857" width="1" height="2" fill="#F6F6F6"/>
<rect x="870" y="857" width="1" height="2" fill="#F6F6F6"/>
<rect x="876" y="857" width="1" height="2" fill="#F6F6F6"/>
<rect x="881" y="857" width="1" height="3" fill="#F6F6F6"/>
<rect x="886" y="857" width="1" height="2" fill="#F6F6F6"/>
<rect x="891" y="857" width="1" height="2" fill="#F6F6F6"/>
<rect x="896" y="857" width="1" height="2" fill="#F6F6F6"/>
<rect x="901" y="857" width="1" height="3" fill="#F6F6F6"/>
<rect x="906" y="857" width="1" height="2" fill="#F6F6F6"/>
<rect x="911" y="857" width="1" height="2" fill="#F6F6F6"/>
<rect x="916" y="857" width="1" height="2" fill="#F6F6F6"/>
<rect x="921" y="857" width="1" height="3" fill="#F6F6F6"/>
<rect x="926" y="857" width="1" height="2" fill="#F6F6F6"/>
<rect x="931" y="857" width="1" height="2" fill="#F6F6F6"/>
<rect x="936" y="857" width="1" height="2" fill="#F6F6F6"/>
<rect x="942" y="857" width="1" height="3" fill="#F6F6F6"/>
<rect x="947" y="857" width="1" height="2" fill="#F6F6F6"/>
<rect x="952" y="857" width="1" height="2" fill="#F6F6F6"/>
<rect x="957" y="857" width="1" height="2" fill="#F6F6F6"/>
<rect x="962" y="857" width="1" height="3" fill="#F6F6F6"/>
<rect x="967" y="857" width="1" height="2" fill="#F6F6F6"/>
<rect x="972" y="857" width="1" height="2" fill="#F6F6F6"/>
<rect x="977" y="857" width="1" height="2" fill="#F6F6F6"/>
<rect x="982" y="857" width="1" height="3" fill="#F6F6F6"/>
<rect x="987" y="857" width="1" height="2" fill="#F6F6F6"/>
<rect x="992" y="857" width="1" height="2" fill="#F6F6F6"/>
<rect x="997" y="857" width="1" height="2" fill="#F6F6F6"/>
<rect x="1003" y="857" width="1" height="3" fill="#F6F6F6"/>
<rect x="1008" y="857" width="1" height="2" fill="#F6F6F6"/>
<rect x="1013" y="857" width="1" height="2" fill="#F6F6F6"/>
<rect x="1018" y="857" width="1" height="2" fill="#F6F6F6"/>
<rect x="1023" y="857" width="1" height="3" fill="#F6F6F6"/>
<rect x="1028" y="857" width="1" height="2" fill="#F6F6F6"/>
<rect x="1033" y="857" width="1" height="2" fill="#F6F6F6"/>
<rect x="1038" y="857" width="1" height="2" fill="#F6F6F6"/>
<rect x="1043" y="857" width="1" height="3" fill="#F6F6F6"/>
<rect x="1048" y="857" width="1" height="2" fill="#F6F6F6"/>
<rect x="1053" y="857" width="1" height="2" fill="#F6F6F6"/>
<rect x="1058" y="857" width="1" height="2" fill="#F6F6F6"/>
<rect x="1063" y="857" width="1" height="3" fill="#F6F6F6"/>
<rect x="1069" y="857" width="1" height="2" fill="#F6F6F6"/>
<rect x="1074" y="857" width="1" height="2" fill="#F6F6F6"/>
<rect x="1079" y="857" width="1" height="2" fill="#F6F6F6"/>
<rect x="1084" y="857" width="1" height="3" fill="#F6F6F6"/>
<rect x="1089" y="857" width="1" height="2" fill="#F6F6F6"/>
<rect x="1094" y="857" width="1" height="2" fill="#F6F6F6"/>
<rect x="1099" y="857" width="1" height="2" fill="#F6F6F6"/>
<rect x="1104" y="857" width="1" height="3" fill="#F6F6F6"/>
<rect x="1109" y="857" width="1" height="2" fill="#F6F6F6"/>
<rect x="1114" y="857" width="1" height="2" fill="#F6F6F6"/>
<rect x="1119" y="857" width="1" height="2" fill="#F6F6F6"/>
<rect x="1124" y="857" width="1" height="3" fill="#F6F6F6"/>
<rect x="1129" y="857" width="1" height="2" fill="#F6F6F6"/>
<rect x="1135" y="857" width="1" height="2" fill="#F6F6F6"/>
<rect x="1140" y="857" width="1" height="2" fill="#F6F6F6"/>
<rect x="1145" y="857" width="1" height="3" fill="#F6F6F6"/>
<rect x="1150" y="857" width="1" height="2" fill="#F6F6F6"/>
<rect x="1155" y="857" width="1" height="2" fill="#F6F6F6"/>
<rect x="1160" y="857" width="1" height="2" fill="#F6F6F6"/>
<rect x="1165" y="857" width="1" height="3" fill="#F6F6F6"/>
<rect x="1170" y="857" width="1" height="2" fill="#F6F6F6"/>
<rect x="1175" y="857" width="1" height="2" fill="#F6F6F6"/>
<rect x="1180" y="857" width="1" height="2" fill="#F6F6F6"/>
<rect x="1185" y="857" width="1" height="3" fill="#F6F6F6"/>
<rect x="1190" y="857" width="1" height="2" fill="#F6F6F6"/>
<rect x="1196" y="857" width="1" height="2" fill="#F6F6F6"/>
<rect x="1201" y="857" width="1" height="2" fill="#F6F6F6"/>
<rect x="1206" y="857" width="1" height="3" fill="#F6F6F6"/>
<rect x="1211" y="857" width="1" height="2" fill="#F6F6F6"/>
<rect x="1216" y="857" width="1" height="2" fill="#F6F6F6"/>
<rect x="1221" y="857" width="1" height="2" fill="#F6F6F6"/>
<rect x="1226" y="857" width="1" height="3" fill="#F6F6F6"/>
<text x="8" y="871" font-size="9" fill="#FFFFFF" text-anchor="start" font-weight="normal" textLength="9.91" lengthAdjust="spacingAndGlyphs" stroke="#FFFFFF" stroke-width="0.35">dB</text>
<text x="47.2" y="871" font-size="9" fill="#FFFFFF" text-anchor="middle" font-weight="normal" textLength="11.71" lengthAdjust="spacingAndGlyphs" stroke="#FFFFFF" stroke-width="0.35">-58</text>
<text x="67.53" y="871" font-size="9" fill="#FFFFFF" text-anchor="middle" font-weight="normal" textLength="11.71" lengthAdjust="spacingAndGlyphs" stroke="#FFFFFF" stroke-width="0.35">-57</text>
<text x="87.86" y="871" font-size="9" fill="#FFFFFF" text-anchor="middle" font-weight="normal" textLength="11.71" lengthAdjust="spacingAndGlyphs" stroke="#FFFFFF" stroke-width="0.35">-56</text>
<text x="108.19" y="871" font-size="9" fill="#FFFFFF" text-anchor="middle" font-weight="normal" textLength="11.71" lengthAdjust="spacingAndGlyphs" stroke="#FFFFFF" stroke-width="0.35">-55</text>
<text x="128.51999999999998" y="871" font-size="9" fill="#FFFFFF" text-anchor="middle" font-weight="normal" textLength="11.71" lengthAdjust="spacingAndGlyphs" stroke="#FFFFFF" stroke-width="0.35">-54</text>
<text x="148.85" y="871" font-size="9" fill="#FFFFFF" text-anchor="middle" font-weight="normal" textLength="11.71" lengthAdjust="spacingAndGlyphs" stroke="#FFFFFF" stroke-width="0.35">-53</text>
<text x="169.18" y="871" font-size="9" fill="#FFFFFF" text-anchor="middle" font-weight="normal" textLength="11.71" lengthAdjust="spacingAndGlyphs" stroke="#FFFFFF" stroke-width="0.35">-52</text>
<text x="189.51" y="871" font-size="9" fill="#FFFFFF" text-anchor="middle" font-weight="normal" textLength="11.71" lengthAdjust="spacingAndGlyphs" stroke="#FFFFFF" stroke-width="0.35">-51</text>
<text x="209.83999999999997" y="871" font-size="9" fill="#FFFFFF" text-anchor="middle" font-weight="normal" textLength="11.71" lengthAdjust="spacingAndGlyphs" stroke="#FFFFFF" stroke-width="0.35">-50</text>
<text x="230.16999999999996" y="871" font-size="9" fill="#FFFFFF" text-anchor="middle" font-weight="normal" textLength="11.71" lengthAdjust="spacingAndGlyphs" stroke="#FFFFFF" stroke-width="0.35">-49</text>
<text x="250.5" y="871" font-size="9" fill="#FFFFFF" text-anchor="middle" font-weight="normal" textLength="11.71" lengthAdjust="spacingAndGlyphs" stroke="#FFFFFF" stroke-width="0.35">-48</text>
<text x="270.83" y="871" font-size="9" fill="#FFFFFF" text-anchor="middle" font-weight="normal" textLength="11.71" lengthAdjust="spacingAndGlyphs" stroke="#FFFFFF" stroke-width="0.35">-47</text>
<text x="291.15999999999997" y="871" font-size="9" fill="#FFFFFF" text-anchor="middle" font-weight="normal" textLength="11.71" lengthAdjust="spacingAndGlyphs" stroke="#FFFFFF" stroke-width="0.35">-46</text>
<text x="311.48999999999995" y="871" font-size="9" fill="#FFFFFF" text-anchor="middle" font-weight="normal" textLength="11.71" lengthAdjust="spacingAndGlyphs" stroke="#FFFFFF" stroke-width="0.35">-45</text>
<text x="331.82" y="871" font-size="9" fill="#FFFFFF" text-anchor="middle" font-weight="normal" textLength="11.71" lengthAdjust="spacingAndGlyphs" stroke="#FFFFFF" stroke-width="0.35">-44</text>
<text x="352.15" y="871" font-size="9" fill="#FFFFFF" text-anchor="middle" font-weight="normal" textLength="11.71" lengthAdjust="spacingAndGlyphs" stroke="#FFFFFF" stroke-width="0.35">-43</text>
<text x="372.47999999999996" y="871" font-size="9" fill="#FFFFFF" text-anchor="middle" font-weight="normal" textLength="11.71" lengthAdjust="spacingAndGlyphs" stroke="#FFFFFF" stroke-width="0.35">-42</text>
<text x="392.80999999999995" y="871" font-size="9" fill="#FFFFFF" text-anchor="middle" font-weight="normal" textLength="11.71" lengthAdjust="spacingAndGlyphs" stroke="#FFFFFF" stroke-width="0.35">-41</text>
<text x="413.13999999999993" y="871" font-size="9" fill="#FFFFFF" text-anchor="middle" font-weight="normal" textLength="11.71" lengthAdjust="spacingAndGlyphs" stroke="#FFFFFF" stroke-width="0.35">-40</text>
<text x="433.46999999999997" y="871" font-size="9" fill="#FFFFFF" text-anchor="middle" font-weight="normal" textLength="11.71" lengthAdjust="spacingAndGlyphs" stroke="#FFFFFF" stroke-width="0.35">-39</text>
<text x="453.79999999999995" y="871" font-size="9" fill="#FFFFFF" text-anchor="middle" font-weight="normal" textLength="11.71" lengthAdjust="spacingAndGlyphs" stroke="#FFFFFF" stroke-width="0.35">-38</text>
<text x="474.12999999999994" y="871" font-size="9" fill="#FFFFFF" text-anchor="middle" font-weight="normal" textLength="11.71" lengthAdjust="spacingAndGlyphs" stroke="#FFFFFF" stroke-width="0.35">-37</text>
<text x="494.46" y="871" font-size="9" fill="#FFFFFF" text-anchor="middle" font-weight="normal" textLength="11.71" lengthAdjust="spacingAndGlyphs" stroke="#FFFFFF" stroke-width="0.35">-36</text>
<text x="514.79" y="871" font-size="9" fill="#FFFFFF" text-anchor="middle" font-weight="normal" textLength="11.71" lengthAdjust="spacingAndGlyphs" stroke="#FFFFFF" stroke-width="0.35">-35</text>
<text x="535.12" y="871" font-size="9" fill="#FFFFFF" text-anchor="middle" font-weight="normal" textLength="11.71" lengthAdjust="spacingAndGlyphs" stroke="#FFFFFF" stroke-width="0.35">-34</text>
<text x="555.4499999999999" y="871" font-size="9" fill="#FFFFFF" text-anchor="middle" font-weight="normal" textLength="11.71" lengthAdjust="spacingAndGlyphs" stroke="#FFFFFF" stroke-width="0.35">-33</text>
<text x="575.78" y="871" font-size="9" fill="#FFFFFF" text-anchor="middle" font-weight="normal" textLength="11.71" lengthAdjust="spacingAndGlyphs" stroke="#FFFFFF" stroke-width="0.35">-32</text>
<text x="596.11" y="871" font-size="9" fill="#FFFFFF" text-anchor="middle" font-weight="normal" textLength="11.71" lengthAdjust="spacingAndGlyphs" stroke="#FFFFFF" stroke-width="0.35">-31</text>
<text x="616.44" y="871" font-size="9" fill="#FFFFFF" text-anchor="middle" font-weight="normal" textLength="11.71" lengthAdjust="spacingAndGlyphs" stroke="#FFFFFF" stroke-width="0.35">-30</text>
<text x="636.77" y="871" font-size="9" fill="#FFFFFF" text-anchor="middle" font-weight="normal" textLength="11.71" lengthAdjust="spacingAndGlyphs" stroke="#FFFFFF" stroke-width="0.35">-29</text>
<text x="657.1" y="871" font-size="9" fill="#FFFFFF" text-anchor="middle" font-weight="normal" textLength="11.71" lengthAdjust="spacingAndGlyphs" stroke="#FFFFFF" stroke-width="0.35">-28</text>
<text x="677.43" y="871" font-size="9" fill="#FFFFFF" text-anchor="middle" font-weight="normal" textLength="11.71" lengthAdjust="spacingAndGlyphs" stroke="#FFFFFF" stroke-width="0.35">-27</text>
<text x="697.76" y="871" font-size="9" fill="#FFFFFF" text-anchor="middle" font-weight="normal" textLength="11.71" lengthAdjust="spacingAndGlyphs" stroke="#FFFFFF" stroke-width="0.35">-26</text>
<text x="718.09" y="871" font-size="9" fill="#FFFFFF" text-anchor="middle" font-weight="normal" textLength="11.71" lengthAdjust="spacingAndGlyphs" stroke="#FFFFFF" stroke-width="0.35">-25</text>
<text x="738.42" y="871" font-size="9" fill="#FFFFFF" text-anchor="middle" font-weight="normal" textLength="11.71" lengthAdjust="spacingAndGlyphs" stroke="#FFFFFF" stroke-width="0.35">-24</text>
<text x="758.75" y="871" font-size="9" fill="#FFFFFF" text-anchor="middle" font-weight="normal" textLength="11.71" lengthAdjust="spacingAndGlyphs" stroke="#FFFFFF" stroke-width="0.35">-23</text>
<text x="779.0799999999999" y="871" font-size="9" fill="#FFFFFF" text-anchor="middle" font-weight="normal" textLength="11.71" lengthAdjust="spacingAndGlyphs" stroke="#FFFFFF" stroke-width="0.35">-22</text>
<text x="799.41" y="871" font-size="9" fill="#FFFFFF" text-anchor="middle" font-weight="normal" textLength="11.71" lengthAdjust="spacingAndGlyphs" stroke="#FFFFFF" stroke-width="0.35">-21</text>
<text x="819.74" y="871" font-size="9" fill="#FFFFFF" text-anchor="middle" font-weight="normal" textLength="11.71" lengthAdjust="spacingAndGlyphs" stroke="#FFFFFF" stroke-width="0.35">-20</text>
<text x="840.0699999999999" y="871" font-size="9" fill="#FFFFFF" text-anchor="middle" font-weight="normal" textLength="11.71" lengthAdjust="spacingAndGlyphs" stroke="#FFFFFF" stroke-width="0.35">-19</text>
<text x="860.4" y="871" font-size="9" fill="#FFFFFF" text-anchor="middle" font-weight="normal" textLength="11.71" lengthAdjust="spacingAndGlyphs" stroke="#FFFFFF" stroke-width="0.35">-18</text>
<text x="880.73" y="871" font-size="9" fill="#FFFFFF" text-anchor="middle" font-weight="normal" textLength="11.71" lengthAdjust="spacingAndGlyphs" stroke="#FFFFFF" stroke-width="0.35">-17</text>
<text x="901.06" y="871" font-size="9" fill="#FFFFFF" text-anchor="middle" font-weight="normal" textLength="11.71" lengthAdjust="spacingAndGlyphs" stroke="#FFFFFF" stroke-width="0.35">-16</text>
<text x="921.39" y="871" font-size="9" fill="#FFFFFF" text-anchor="middle" font-weight="normal" textLength="11.71" lengthAdjust="spacingAndGlyphs" stroke="#FFFFFF" stroke-width="0.35">-15</text>
<text x="941.72" y="871" font-size="9" fill="#FFFFFF" text-anchor="middle" font-weight="normal" textLength="11.71" lengthAdjust="spacingAndGlyphs" stroke="#FFFFFF" stroke-width="0.35">-14</text>
<text x="962.05" y="871" font-size="9" fill="#FFFFFF" text-anchor="middle" font-weight="normal" textLength="11.71" lengthAdjust="spacingAndGlyphs" stroke="#FFFFFF" stroke-width="0.35">-13</text>
<text x="982.38" y="871" font-size="9" fill="#FFFFFF" text-anchor="middle" font-weight="normal" textLength="11.71" lengthAdjust="spacingAndGlyphs" stroke="#FFFFFF" stroke-width="0.35">-12</text>
<text x="1002.7099999999999" y="871" font-size="9" fill="#FFFFFF" text-anchor="middle" font-weight="normal" textLength="11.10" lengthAdjust="spacingAndGlyphs" stroke="#FFFFFF" stroke-width="0.35">-11</text>
<text x="1023.04" y="871" font-size="9" fill="#FFFFFF" text-anchor="middle" font-weight="normal" textLength="11.71" lengthAdjust="spacingAndGlyphs" stroke="#FFFFFF" stroke-width="0.35">-10</text>
<text x="1043.37" y="871" font-size="9" fill="#FFFFFF" text-anchor="middle" font-weight="normal" textLength="7.20" lengthAdjust="spacingAndGlyphs" stroke="#FFFFFF" stroke-width="0.35">-9</text>
<text x="1063.6999999999998" y="871" font-size="9" fill="#FFFFFF" text-anchor="middle" font-weight="normal" textLength="7.20" lengthAdjust="spacingAndGlyphs" stroke="#FFFFFF" stroke-width="0.35">-8</text>
<text x="1084.03" y="871" font-size="9" fill="#FFFFFF" text-anchor="middle" font-weight="normal" textLength="7.20" lengthAdjust="spacingAndGlyphs" stroke="#FFFFFF" stroke-width="0.35">-7</text>
<text x="1104.36" y="871" font-size="9" fill="#FFFFFF" text-anchor="middle" font-weight="normal" textLength="7.20" lengthAdjust="spacingAndGlyphs" stroke="#FFFFFF" stroke-width="0.35">-6</text>
<text x="1124.69" y="871" font-size="9" fill="#FFFFFF" text-anchor="middle" font-weight="normal" textLength="7.20" lengthAdjust="spacingAndGlyphs" stroke="#FFFFFF" stroke-width="0.35">-5</text>
<text x="1145.02" y="871" font-size="9" fill="#FFFFFF" text-anchor="middle" font-weight="normal" textLength="7.20" lengthAdjust="spacingAndGlyphs" stroke="#FFFFFF" stroke-width="0.35">-4</text>
<text x="1165.35" y="871" font-size="9" fill="#FFFFFF" text-anchor="middle" font-weight="normal" textLength="7.20" lengthAdjust="spacingAndGlyphs" stroke="#FFFFFF" stroke-width="0.35">-3</text>
<text x="1185.68" y="871" font-size="9" fill="#FFFFFF" text-anchor="middle" font-weight="normal" textLength="7.20" lengthAdjust="spacingAndGlyphs" stroke="#FFFFFF" stroke-width="0.35">-2</text>
<text x="1206.01" y="871" font-size="9" fill="#FFFFFF" text-anchor="middle" font-weight="normal" textLength="7.20" lengthAdjust="spacingAndGlyphs" stroke="#FFFFFF" stroke-width="0.35">-1</text>
<text x="1226.34" y="871" font-size="9" fill="#FFFFFF" text-anchor="middle" font-weight="normal" textLength="4.50" lengthAdjust="spacingAndGlyphs" stroke="#FFFFFF" stroke-width="0.35">0</text>
<rect x="227" y="785" width="1" height="5" fill="#0000FF"/>
<polygon shape-rendering="geometricPrecision" points="228,785 232,785 228,789" fill="#FFFF00"/>
<polygon shape-rendering="geometricPrecision" points="487,785 491,785 491,789" fill="#FFFF00"/>
<rect x="227" y="783" width="1" height="63" fill="#2C3CD0"/>
<rect x="227" y="794" width="1" height="43" fill="#8E9CEC"/>
<rect x="227" y="814" width="1" height="1" fill="#FFFFFF"/>
<rect x="227" y="837" width="1" height="1" fill="#FFFFFF"/>
<rect x="227" y="857" width="1" height="3" fill="#000"/>
<rect x="227" y="866" width="1" height="2" fill="#000"/>
<path shape-rendering="geometricPrecision" d="M540,186 Q540,180 546,180 H1176 Q1182,180 1182,186 V602 H540 Z" fill="#7A8EE2"/>
<path shape-rendering="geometricPrecision" d="M540,186 Q540,180 546,180 H1176 Q1182,180 1182,186 V210 H540 Z" fill="url(#title)"/>
<rect x="540" y="186" width="1" height="416" fill="#5A5CDA"/>
<rect x="1181" y="186" width="1" height="416" fill="#5A5CDA"/>
<rect x="540" y="601" width="642" height="1" fill="#5A5CDA"/>
<rect x="544" y="210" width="634" height="388" fill="#ECE9D8"/>
<text x="566" y="202.3" font-size="13.5" font-weight="bold" fill="#E2EAFA" textLength="183.5" lengthAdjust="spacingAndGlyphs">Analysis - TDKMA_Studer.wav</text>
<rect x="547" y="189" width="12" height="7" fill="#800080"/>
<path shape-rendering="geometricPrecision" d="M548,192 l2,-2 l2,2 l2,-2 l2,2 l2,-2" stroke="#00FF00" stroke-width="1" fill="none"/>
<circle shape-rendering="geometricPrecision" cx="552" cy="196" r="3.2" fill="#20E0F0" stroke="#000" stroke-width="1"/>
<line shape-rendering="geometricPrecision" x1="554" y1="198" x2="559" y2="202" stroke="#E040E0" stroke-width="2"/>
<rect x="1156" y="186" width="20" height="20" rx="3" fill="url(#closeb)" stroke="#E6D8E0" stroke-width="1"/>
<path shape-rendering="geometricPrecision" d="M1161,191 L1171,201 M1171,191 L1161,201" stroke="#FFFFFF" stroke-width="2.2"/>
<rect x="550" y="217" width="599" height="289" fill="#FFFFFF"/>
<rect x="550" y="217" width="598" height="288" fill="#A09D8C"/>
<rect x="551" y="218" width="597" height="287" fill="#404040"/>
<rect x="552" y="219" width="596" height="285" fill="#000000"/>
<rect x="553" y="219" width="1" height="285" fill="#5C5C5C"/>
<rect x="565" y="219" width="1" height="285" fill="#5C5C5C"/>
<rect x="577" y="219" width="1" height="285" fill="#5C5C5C"/>
<rect x="592" y="219" width="1" height="285" fill="#5C5C5C"/>
<rect x="606" y="219" width="1" height="285" fill="#5C5C5C"/>
<rect x="618" y="219" width="1" height="285" fill="#5C5C5C"/>
<rect x="630" y="219" width="1" height="285" fill="#5C5C5C"/>
<rect x="645" y="219" width="1" height="285" fill="#5C5C5C"/>
<rect x="659" y="219" width="1" height="285" fill="#5C5C5C"/>
<rect x="671" y="219" width="1" height="285" fill="#5C5C5C"/>
<rect x="683" y="219" width="1" height="285" fill="#5C5C5C"/>
<rect x="699" y="219" width="1" height="285" fill="#5C5C5C"/>
<rect x="713" y="219" width="1" height="285" fill="#5C5C5C"/>
<rect x="724" y="219" width="1" height="285" fill="#5C5C5C"/>
<rect x="736" y="219" width="1" height="285" fill="#5C5C5C"/>
<rect x="752" y="219" width="1" height="285" fill="#5C5C5C"/>
<rect x="766" y="219" width="1" height="285" fill="#5C5C5C"/>
<rect x="777" y="219" width="1" height="285" fill="#5C5C5C"/>
<rect x="789" y="219" width="1" height="285" fill="#5C5C5C"/>
<rect x="805" y="219" width="1" height="285" fill="#5C5C5C"/>
<rect x="819" y="219" width="1" height="285" fill="#5C5C5C"/>
<rect x="831" y="219" width="1" height="285" fill="#5C5C5C"/>
<rect x="842" y="219" width="1" height="285" fill="#5C5C5C"/>
<rect x="858" y="219" width="1" height="285" fill="#5C5C5C"/>
<rect x="872" y="219" width="1" height="285" fill="#5C5C5C"/>
<rect x="884" y="219" width="1" height="285" fill="#5C5C5C"/>
<rect x="895" y="219" width="1" height="285" fill="#5C5C5C"/>
<rect x="911" y="219" width="1" height="285" fill="#5C5C5C"/>
<rect x="926" y="219" width="1" height="285" fill="#5C5C5C"/>
<rect x="937" y="219" width="1" height="285" fill="#5C5C5C"/>
<rect x="948" y="219" width="1" height="285" fill="#5C5C5C"/>
<rect x="965" y="219" width="1" height="285" fill="#5C5C5C"/>
<rect x="979" y="219" width="1" height="285" fill="#5C5C5C"/>
<rect x="990" y="219" width="1" height="285" fill="#5C5C5C"/>
<rect x="1001" y="219" width="1" height="285" fill="#5C5C5C"/>
<rect x="1018" y="219" width="1" height="285" fill="#5C5C5C"/>
<rect x="1032" y="219" width="1" height="285" fill="#5C5C5C"/>
<rect x="1044" y="219" width="1" height="285" fill="#5C5C5C"/>
<rect x="1054" y="219" width="1" height="285" fill="#5C5C5C"/>
<rect x="1071" y="219" width="1" height="285" fill="#5C5C5C"/>
<rect x="1085" y="219" width="1" height="285" fill="#5C5C5C"/>
<rect x="1097" y="219" width="1" height="285" fill="#5C5C5C"/>
<rect x="1107" y="219" width="1" height="285" fill="#5C5C5C"/>
<rect x="1125" y="219" width="1" height="285" fill="#5C5C5C"/>
<rect x="1139" y="219" width="1" height="285" fill="#5C5C5C"/>
<rect x="552" y="244" width="596" height="1" fill="#5C5C5C"/>
<rect x="552" y="270" width="596" height="1" fill="#5C5C5C"/>
<rect x="552" y="297" width="596" height="1" fill="#5C5C5C"/>
<rect x="552" y="323" width="596" height="1" fill="#5C5C5C"/>
<rect x="552" y="350" width="596" height="1" fill="#5C5C5C"/>
<rect x="552" y="376" width="596" height="1" fill="#5C5C5C"/>
<rect x="552" y="402" width="596" height="1" fill="#5C5C5C"/>
<rect x="552" y="429" width="596" height="1" fill="#5C5C5C"/>
<rect x="552" y="455" width="596" height="1" fill="#5C5C5C"/>
<rect x="552" y="482" width="596" height="1" fill="#5C5C5C"/>
<path shape-rendering="geometricPrecision" d="M552,409.7 L557.7,411 L565.4,408.5 L577.4,412.3 L581.7,408.9 L592.9,409.7 L599.7,412.3 L604.9,411.4 L609.1,413.5 L628.9,415.2 L635.7,415.7 L649.4,419.1 L659.7,422 L666.6,426.9 L670,427.7 L671.7,424.3" stroke="#FF00FF" stroke-width="1.6" fill="none"/>
<path shape-rendering="geometricPrecision" d="M671.5,424 L672.5,402 L673.5,376 L674.5,375 L675.5,385 L676.5,402 L677.5,425 L679.5,437" stroke="#FF00FF" stroke-width="1.2" fill="none"/>
<path d="M680.5,427.5V437.0M681.5,427.5V430.9M682.5,430.9V447.4M683.5,442.1V447.4M684.5,431.5V442.1M685.5,425.6V431.5M686.5,425.6V446.7M687.5,445.1V446.7M688.5,434.2V445.1M689.5,434.2V445.6M690.5,437.3V445.6M691.5,426.8V437.3M692.5,426.8V432.4M693.5,432.4V440.3M694.5,438.5V440.3M695.5,438.5V440.4M696.5,440.4V444.6M697.5,444.5V446.0M698.5,436.1V444.5M699.5,430.7V436.1M700.5,430.7V432.7M701.5,432.7V434.2M702.5,430.5V434.0M703.5,430.5V436.3M704.5,436.3V444.8M705.5,443.7V445.2M706.5,428.8V443.7M707.5,428.1V429.6M708.5,428.1V438.5M709.5,438.5V445.3M710.5,440.9V445.3M711.5,432.1V440.9M712.5,432.1V437.3M713.5,434.2V437.3M714.5,434.2V435.7M715.5,434.2V435.7M716.5,434.8V436.3M717.5,434.5V436.3M718.5,434.5V436.0M719.5,433.9V435.4M720.5,433.9V435.4M721.5,435.2V436.7M722.5,436.1V437.6M723.5,434.1V436.1M724.5,434.1V436.2M725.5,435.0V436.5M726.5,433.9V435.4M727.5,433.9V435.6M728.5,434.7V436.2M729.5,433.4V434.9M730.5,433.4V434.9M731.5,434.2V440.4M732.5,431.8V440.4M733.5,431.8V436.8M734.5,436.8V444.2M735.5,437.2V444.2M736.5,437.2V439.0M737.5,439.0V440.7M738.5,435.5V440.7M739.5,435.2V436.7M740.5,435.2V436.7M741.5,430.6V435.3M742.5,430.6V437.1M743.5,437.1V438.6M744.5,438.2V439.7M745.5,432.3V448.6M746.5,443.1V448.6M747.5,439.3V443.1M748.5,432.4V444.4M749.5,440.2V441.7M750.5,440.2V441.9M751.5,441.9V443.4M752.5,432.5V444.9M753.5,428.6V442.7M754.5,428.6V445.2M755.5,432.6V445.3M756.5,432.7V445.5M757.5,441.2V447.0M758.5,443.6V447.0M759.5,433.0V443.6M760.5,429.4V446.0M761.5,429.4V435.7M762.5,435.7V450.0M763.5,434.2V450.0M764.5,434.6V446.2M765.5,431.4V443.0M766.5,431.4V437.5M767.5,436.0V446.4M768.5,439.0V441.7M769.5,439.3V441.7M770.5,439.3V441.4M771.5,437.8V447.2M772.5,438.2V447.2M773.5,444.8V449.0M774.5,438.6V449.0M775.5,435.3V447.0M776.5,411.0V451.6M777.5,435.1V449.3M778.5,438.7V452.5M779.5,437.9V449.4M780.5,435.2V449.7M781.5,435.4V449.1M782.5,432.9V451.0M783.5,412.4V450.3M784.5,428.8V453.2M785.5,431.3V450.3M786.5,432.8V454.9M787.5,417.1V454.0M788.5,432.3V450.3M789.5,431.2V455.7M790.5,422.6V452.3M791.5,433.9V455.3M792.5,436.7V454.7M793.5,435.0V451.4M794.5,415.1V452.8M795.5,414.8V456.5M796.5,435.5V455.0M797.5,430.0V456.9M798.5,429.6V454.4M799.5,428.3V455.9M800.5,425.3V454.8M801.5,414.6V455.7M802.5,434.3V453.2M803.5,431.3V454.5M804.5,435.2V456.2M805.5,438.7V456.8M806.5,408.5V456.8M807.5,435.4V453.5M808.5,435.8V458.6M809.5,440.6V457.9M810.5,429.6V459.8M811.5,437.9V457.7M812.5,410.8V459.4M813.5,433.2V456.5M814.5,429.8V459.8M815.5,422.2V455.9M816.5,435.7V458.9M817.5,434.0V457.6M818.5,433.1V456.5M819.5,436.7V459.2M820.5,433.2V456.3M821.5,436.3V457.7M822.5,442.0V457.9M823.5,440.6V462.3M824.5,429.4V459.1M825.5,438.1V463.0M826.5,439.3V461.8M827.5,431.3V461.8M828.5,435.0V458.7M829.5,424.8V462.4M830.5,430.6V460.0M831.5,429.9V460.9M832.5,437.5V461.8M833.5,441.0V460.1M834.5,441.2V462.7M835.5,438.3V462.8M836.5,444.2V463.7M837.5,445.3V461.2M838.5,433.2V465.0M839.5,433.0V461.1M840.5,440.8V466.6M841.5,439.3V461.6M842.5,439.5V467.3M843.5,442.3V466.0M844.5,435.3V465.3M845.5,437.2V464.3M846.5,440.4V464.0M847.5,441.7V467.9M848.5,437.9V465.7M849.5,438.7V468.1M850.5,444.4V468.5M851.5,448.1V468.0M852.5,445.4V464.4M853.5,448.0V469.9M854.5,444.1V468.9M855.5,444.0V467.1M856.5,443.3V466.8M857.5,440.6V465.9M858.5,441.8V469.6M859.5,434.3V469.7M860.5,437.4V466.7M861.5,439.7V468.4M862.5,440.8V468.1M863.5,441.3V467.9M864.5,443.3V468.3M865.5,440.4V466.4M866.5,449.8V466.0M867.5,446.8V464.8M868.5,449.2V467.5M869.5,445.3V468.4M870.5,442.8V469.5M871.5,445.6V465.2M872.5,435.0V466.9M873.5,436.3V470.7M874.5,443.3V466.1M875.5,440.8V468.2M876.5,438.9V468.8M877.5,419.0V466.9M878.5,441.3V468.9M879.5,429.0V469.7M880.5,443.4V466.3M881.5,445.8V467.8M882.5,438.9V468.9M883.5,441.5V468.3M884.5,446.2V469.1M885.5,432.5V466.3M886.5,444.0V467.7M887.5,419.3V468.7M888.5,426.7V470.1M889.5,443.6V467.6M890.5,450.2V466.2M891.5,439.2V465.4M892.5,446.8V466.7M893.5,450.9V467.6M894.5,449.1V469.4M895.5,439.1V470.2M896.5,447.7V466.2M897.5,450.0V466.5M898.5,440.6V470.7M899.5,449.5V469.5M900.5,447.1V469.4M901.5,440.5V469.1M902.5,449.7V464.3M903.5,442.5V463.7M904.5,431.6V464.2M905.5,449.8V458.8M906.5,450.9V463.9M907.5,447.9V462.7M908.5,446.6V468.6M909.5,447.9V468.1M910.5,452.0V467.1M911.5,451.6V470.6M912.5,442.1V471.8M913.5,450.0V468.1M914.5,435.8V472.3M915.5,447.9V468.6M916.5,436.5V471.1M917.5,447.6V468.6M918.5,441.9V470.1M919.5,425.9V470.9M920.5,449.9V473.9M921.5,441.1V474.8M922.5,450.7V471.2M923.5,449.5V475.2M924.5,450.0V475.2M925.5,451.7V471.6M926.5,440.3V473.2M927.5,451.4V472.5M928.5,452.3V471.7M929.5,446.0V475.6M930.5,450.0V472.2M931.5,422.1V474.3M932.5,452.5V474.3M933.5,447.8V474.9M934.5,446.3V474.1M935.5,453.0V474.1M936.5,443.3V478.3M937.5,443.2V473.7M938.5,447.1V476.1M939.5,448.3V474.7M940.5,435.6V475.3M941.5,441.1V479.6M942.5,448.2V478.4M943.5,448.2V475.5M944.5,436.6V478.5M945.5,448.6V477.9M946.5,418.6V480.5M947.5,453.6V476.9M948.5,453.9V479.4M949.5,445.5V476.8M950.5,452.3V476.6M951.5,450.3V480.3M952.5,450.8V478.6M953.5,450.8V479.9M954.5,454.3V481.3M955.5,450.1V481.3M956.5,454.1V478.6M957.5,451.2V481.9M958.5,450.1V478.2M959.5,449.9V478.4M960.5,448.9V482.7M961.5,436.3V480.0M962.5,455.2V479.3M963.5,450.6V481.1M964.5,440.8V483.6M965.5,455.0V482.6M966.5,451.8V480.2M967.5,455.1V482.5M968.5,453.9V480.8M969.5,452.7V483.3M970.5,451.5V483.9M971.5,451.6V483.1M972.5,451.0V480.3M973.5,457.2V482.4M974.5,452.4V480.9M975.5,438.8V485.7M976.5,449.0V482.0M977.5,453.7V484.0M978.5,447.6V481.0M979.5,457.9V485.7M980.5,454.5V482.4M981.5,453.7V483.9M982.5,456.1V481.8M983.5,457.2V481.6M984.5,458.3V486.4M985.5,455.2V483.4M986.5,456.3V487.3M987.5,452.7V482.1M988.5,457.1V484.9M989.5,442.4V482.3M990.5,453.8V486.3M991.5,455.1V486.8M992.5,457.4V488.4M993.5,444.1V485.2M994.5,456.3V488.7M995.5,448.9V488.2M996.5,453.5V484.3M997.5,455.3V488.3M998.5,459.6V485.0M999.5,454.9V489.0M1000.5,459.6V487.8M1001.5,451.0V489.6M1002.5,452.5V485.9M1003.5,460.9V485.8M1004.5,459.6V489.1M1005.5,457.8V489.5M1006.5,457.1V485.2M1007.5,456.8V486.3M1008.5,456.9V485.1M1009.5,461.3V488.3M1010.5,458.6V486.9M1011.5,458.7V490.5M1012.5,456.0V491.1M1013.5,458.9V486.2M1014.5,456.3V491.6M1015.5,460.0V486.5M1016.5,461.8V487.8M1017.5,460.9V491.5M1018.5,464.0V487.0M1019.5,445.8V492.2M1020.5,463.6V487.7M1021.5,460.0V491.3M1022.5,453.4V488.9M1023.5,462.4V489.0M1024.5,458.5V492.8M1025.5,465.1V490.5M1026.5,430.6V490.1M1027.5,448.0V488.2M1028.5,464.7V490.0M1029.5,460.6V491.5M1030.5,458.9V489.4M1031.5,450.2V490.6M1032.5,461.8V489.2M1033.5,465.2V490.0M1034.5,434.4V491.5M1035.5,463.0V488.8M1036.5,464.1V493.5M1037.5,452.8V492.7M1038.5,465.3V493.5M1039.5,455.8V493.9M1040.5,464.1V490.0M1041.5,465.3V489.1M1042.5,462.6V490.6M1043.5,465.4V493.6M1044.5,463.5V493.7M1045.5,465.2V493.8M1046.5,463.2V494.0M1047.5,465.1V494.9M1048.5,443.9V493.1M1049.5,461.3V491.8M1050.5,450.6V491.9M1051.5,463.2V492.2M1052.5,466.8V491.8M1053.5,466.3V495.5M1054.5,466.3V490.8M1055.5,460.3V495.3M1056.5,460.7V492.1M1057.5,457.2V495.9M1058.5,465.3V490.9M1059.5,465.3V493.7M1060.5,469.4V492.8M1061.5,470.6V492.1M1062.5,453.1V495.6M1063.5,468.6V490.6M1064.5,469.5V491.9M1065.5,452.5V495.6M1066.5,461.7V493.3M1067.5,469.4V492.6M1068.5,465.9V494.2M1069.5,471.1V492.6M1070.5,465.4V495.5M1071.5,451.9V491.3M1072.5,466.5V492.5M1073.5,441.6V496.0M1074.5,460.8V494.2M1075.5,470.8V490.8M1076.5,467.9V488.0M1077.5,470.1V483.6M1078.5,465.1V477.6M1079.5,470.9V476.3M1080.5,463.2V476.8M1081.5,468.8V476.0M1082.5,458.1V476.6M1083.5,472.2V479.9M1084.5,460.1V481.8M1085.5,463.3V482.2M1086.5,469.8V483.3M1087.5,464.3V484.9M1088.5,467.1V489.2M1089.5,468.9V490.4M1090.5,468.7V494.3M1091.5,468.8V495.0M1092.5,471.1V496.2M1093.5,454.8V494.8M1094.5,473.3V496.1M1095.5,470.6V492.0M1096.5,469.6V492.7M1097.5,473.3V491.8M1098.5,474.3V492.8M1099.5,472.3V494.7M1100.5,470.0V492.8M1101.5,458.4V494.6M1102.5,470.0V496.6M1103.5,471.1V493.6M1104.5,471.5V495.9M1105.5,470.6V497.2M1106.5,470.8V492.3M1107.5,470.4V494.7M1108.5,472.5V491.6M1109.5,470.8V492.9M1110.5,467.3V493.5M1111.5,473.5V497.1M1112.5,470.3V493.4M1113.5,471.9V493.4M1114.5,454.6V497.9M1115.5,470.7V497.5M1116.5,475.3V496.1M1117.5,462.4V498.2M1118.5,470.6V497.9M1119.5,472.5V493.5M1120.5,464.5V495.6M1121.5,472.3V492.8M1122.5,470.4V496.3M1123.5,465.4V496.9M1124.5,469.4V496.8M1125.5,470.4V495.2M1126.5,452.8V493.5M1127.5,474.3V496.2M1128.5,471.2V493.7M1129.5,473.0V493.8M1130.5,463.6V495.2M1131.5,471.8V494.2M1132.5,471.8V495.3M1133.5,456.1V497.6M1134.5,472.0V495.2M1135.5,470.4V494.8M1136.5,473.1V497.0M1137.5,469.3V499.3M1138.5,474.8V498.0M1139.5,465.3V498.6M1140.5,473.2V499.4M1141.5,472.7V501.4M1142.5,476.4V500.3M1143.5,477.1V501.7M1144.5,482.3V499.5M1145.5,475.1V500.9M1146.5,488.4V504.4M1147.5,488.3V502.6M684.5,418V435M694.5,425V440M700.5,429V440M704.5,428V440M716.5,430V438M728.5,392V432M734.5,418V435M741.5,424V440M750.5,420V440M759.5,379V440M781.5,403V440M798.5,403V440M812.5,414V440M824.5,415V442M834.5,414V445M843.5,413V445M851.5,426V450M871.5,417V452M878.5,426V455M882.5,419V455M887.5,426V455M892.5,428V455M900.5,423V455M904.5,425V455M918.5,429V450M920.5,427V450M930.5,430V450M935.5,434V450M940.5,433V450M948.5,432V452M955.5,433V452M1036.5,436V465M1080.5,258V480M1081.5,416V480M1089.5,450V475M1115.5,446V475M1130.5,457V475M1133.5,443V475M1138.5,409V475" stroke="#FF00FF" stroke-width="1" fill="none"/>
<rect x="680" y="437" width="1" height="1" fill="#00E8F0"/>
<rect x="682" y="447" width="1" height="1" fill="#00E8F0"/>
<rect x="686" y="426" width="1" height="1" fill="#00E8F0"/>
<rect x="688" y="434" width="1" height="1" fill="#00E8F0"/>
<rect x="688" y="445" width="1" height="1" fill="#00E8F0"/>
<rect x="691" y="427" width="1" height="1" fill="#00E8F0"/>
<rect x="691" y="437" width="1" height="1" fill="#00E8F0"/>
<rect x="693" y="432" width="1" height="1" fill="#00E8F0"/>
<rect x="696" y="445" width="1" height="1" fill="#00E8F0"/>
<rect x="699" y="436" width="1" height="1" fill="#00E8F0"/>
<rect x="700" y="433" width="1" height="1" fill="#00E8F0"/>
<rect x="701" y="433" width="1" height="1" fill="#00E8F0"/>
<rect x="708" y="428" width="1" height="1" fill="#00E8F0"/>
<rect x="709" y="445" width="1" height="1" fill="#00E8F0"/>
<rect x="711" y="441" width="1" height="1" fill="#00E8F0"/>
<rect x="716" y="435" width="1" height="1" fill="#00E8F0"/>
<rect x="717" y="436" width="1" height="1" fill="#00E8F0"/>
<rect x="720" y="435" width="1" height="1" fill="#00E8F0"/>
<rect x="723" y="434" width="1" height="1" fill="#00E8F0"/>
<rect x="730" y="435" width="1" height="1" fill="#00E8F0"/>
<rect x="732" y="440" width="1" height="1" fill="#00E8F0"/>
<rect x="733" y="437" width="1" height="1" fill="#00E8F0"/>
<rect x="734" y="437" width="1" height="1" fill="#00E8F0"/>
<rect x="736" y="437" width="1" height="1" fill="#00E8F0"/>
<rect x="738" y="435" width="1" height="1" fill="#00E8F0"/>
<rect x="739" y="437" width="1" height="1" fill="#00E8F0"/>
<rect x="740" y="435" width="1" height="1" fill="#00E8F0"/>
<rect x="741" y="431" width="1" height="1" fill="#00E8F0"/>
<rect x="744" y="438" width="1" height="1" fill="#00E8F0"/>
<rect x="748" y="444" width="1" height="1" fill="#00E8F0"/>
<rect x="749" y="440" width="1" height="1" fill="#00E8F0"/>
<rect x="751" y="442" width="1" height="1" fill="#00E8F0"/>
<rect x="753" y="443" width="1" height="1" fill="#00E8F0"/>
<rect x="755" y="433" width="1" height="1" fill="#00E8F0"/>
<rect x="756" y="445" width="1" height="1" fill="#00E8F0"/>
<rect x="757" y="441" width="1" height="1" fill="#00E8F0"/>
<rect x="758" y="447" width="1" height="1" fill="#00E8F0"/>
<rect x="759" y="433" width="1" height="1" fill="#00E8F0"/>
<rect x="759" y="444" width="1" height="1" fill="#00E8F0"/>
<rect x="761" y="436" width="1" height="1" fill="#00E8F0"/>
<rect x="762" y="436" width="1" height="1" fill="#00E8F0"/>
<rect x="764" y="435" width="1" height="1" fill="#00E8F0"/>
<rect x="764" y="446" width="1" height="1" fill="#00E8F0"/>
<rect x="765" y="431" width="1" height="1" fill="#00E8F0"/>
<rect x="768" y="442" width="1" height="1" fill="#00E8F0"/>
<rect x="770" y="439" width="1" height="1" fill="#00E8F0"/>
<rect x="771" y="447" width="1" height="1" fill="#00E8F0"/>
<rect x="779" y="438" width="1" height="1" fill="#00E8F0"/>
<rect x="780" y="435" width="1" height="1" fill="#00E8F0"/>
<rect x="782" y="433" width="1" height="1" fill="#00E8F0"/>
<rect x="784" y="429" width="1" height="1" fill="#00E8F0"/>
<rect x="785" y="431" width="1" height="1" fill="#00E8F0"/>
<rect x="788" y="432" width="1" height="1" fill="#00E8F0"/>
<rect x="789" y="456" width="1" height="1" fill="#00E8F0"/>
<rect x="790" y="423" width="1" height="1" fill="#00E8F0"/>
<rect x="791" y="434" width="1" height="1" fill="#00E8F0"/>
<rect x="793" y="435" width="1" height="1" fill="#00E8F0"/>
<rect x="793" y="451" width="1" height="1" fill="#00E8F0"/>
<rect x="799" y="456" width="1" height="1" fill="#00E8F0"/>
<rect x="803" y="431" width="1" height="1" fill="#00E8F0"/>
<rect x="803" y="454" width="1" height="1" fill="#00E8F0"/>
<rect x="806" y="409" width="1" height="1" fill="#00E8F0"/>
<rect x="807" y="435" width="1" height="1" fill="#00E8F0"/>
<rect x="809" y="441" width="1" height="1" fill="#00E8F0"/>
<rect x="809" y="458" width="1" height="1" fill="#00E8F0"/>
<rect x="810" y="430" width="1" height="1" fill="#00E8F0"/>
<rect x="811" y="438" width="1" height="1" fill="#00E8F0"/>
<rect x="811" y="458" width="1" height="1" fill="#00E8F0"/>
<rect x="812" y="411" width="1" height="1" fill="#00E8F0"/>
<rect x="814" y="430" width="1" height="1" fill="#00E8F0"/>
<rect x="816" y="436" width="1" height="1" fill="#00E8F0"/>
<rect x="817" y="434" width="1" height="1" fill="#00E8F0"/>
<rect x="817" y="458" width="1" height="1" fill="#00E8F0"/>
<rect x="818" y="456" width="1" height="1" fill="#00E8F0"/>
<rect x="820" y="456" width="1" height="1" fill="#00E8F0"/>
<rect x="823" y="441" width="1" height="1" fill="#00E8F0"/>
<rect x="823" y="462" width="1" height="1" fill="#00E8F0"/>
<rect x="826" y="439" width="1" height="1" fill="#00E8F0"/>
<rect x="826" y="462" width="1" height="1" fill="#00E8F0"/>
<rect x="827" y="431" width="1" height="1" fill="#00E8F0"/>
<rect x="829" y="425" width="1" height="1" fill="#00E8F0"/>
<rect x="830" y="431" width="1" height="1" fill="#00E8F0"/>
<rect x="831" y="430" width="1" height="1" fill="#00E8F0"/>
<rect x="833" y="460" width="1" height="1" fill="#00E8F0"/>
<rect x="834" y="441" width="1" height="1" fill="#00E8F0"/>
<rect x="835" y="438" width="1" height="1" fill="#00E8F0"/>
<rect x="836" y="444" width="1" height="1" fill="#00E8F0"/>
<rect x="838" y="433" width="1" height="1" fill="#00E8F0"/>
<rect x="840" y="441" width="1" height="1" fill="#00E8F0"/>
<rect x="843" y="466" width="1" height="1" fill="#00E8F0"/>
<rect x="846" y="440" width="1" height="1" fill="#00E8F0"/>
<rect x="847" y="442" width="1" height="1" fill="#00E8F0"/>
<rect x="850" y="444" width="1" height="1" fill="#00E8F0"/>
<rect x="850" y="469" width="1" height="1" fill="#00E8F0"/>
<rect x="853" y="448" width="1" height="1" fill="#00E8F0"/>
<rect x="856" y="467" width="1" height="1" fill="#00E8F0"/>
<rect x="859" y="470" width="1" height="1" fill="#00E8F0"/>
<rect x="861" y="440" width="1" height="1" fill="#00E8F0"/>
<rect x="861" y="468" width="1" height="1" fill="#00E8F0"/>
<rect x="863" y="468" width="1" height="1" fill="#00E8F0"/>
<rect x="864" y="468" width="1" height="1" fill="#00E8F0"/>
<rect x="865" y="466" width="1" height="1" fill="#00E8F0"/>
<rect x="866" y="450" width="1" height="1" fill="#00E8F0"/>
<rect x="867" y="465" width="1" height="1" fill="#00E8F0"/>
<rect x="868" y="449" width="1" height="1" fill="#00E8F0"/>
<rect x="871" y="446" width="1" height="1" fill="#00E8F0"/>
<rect x="871" y="465" width="1" height="1" fill="#00E8F0"/>
<rect x="872" y="435" width="1" height="1" fill="#00E8F0"/>
<rect x="882" y="439" width="1" height="1" fill="#00E8F0"/>
<rect x="883" y="468" width="1" height="1" fill="#00E8F0"/>
<rect x="888" y="470" width="1" height="1" fill="#00E8F0"/>
<rect x="890" y="466" width="1" height="1" fill="#00E8F0"/>
<rect x="891" y="439" width="1" height="1" fill="#00E8F0"/>
<rect x="891" y="465" width="1" height="1" fill="#00E8F0"/>
<rect x="893" y="451" width="1" height="1" fill="#00E8F0"/>
<rect x="896" y="448" width="1" height="1" fill="#00E8F0"/>
<rect x="897" y="466" width="1" height="1" fill="#00E8F0"/>
<rect x="898" y="471" width="1" height="1" fill="#00E8F0"/>
<rect x="899" y="469" width="1" height="1" fill="#00E8F0"/>
<rect x="901" y="469" width="1" height="1" fill="#00E8F0"/>
<rect x="902" y="450" width="1" height="1" fill="#00E8F0"/>
<rect x="902" y="464" width="1" height="1" fill="#00E8F0"/>
<rect x="903" y="442" width="1" height="1" fill="#00E8F0"/>
<rect x="905" y="450" width="1" height="1" fill="#00E8F0"/>
<rect x="907" y="463" width="1" height="1" fill="#00E8F0"/>
<rect x="908" y="447" width="1" height="1" fill="#00E8F0"/>
<rect x="910" y="452" width="1" height="1" fill="#00E8F0"/>
<rect x="910" y="467" width="1" height="1" fill="#00E8F0"/>
<rect x="911" y="452" width="1" height="1" fill="#00E8F0"/>
<rect x="913" y="468" width="1" height="1" fill="#00E8F0"/>
<rect x="914" y="472" width="1" height="1" fill="#00E8F0"/>
<rect x="915" y="469" width="1" height="1" fill="#00E8F0"/>
<rect x="916" y="471" width="1" height="1" fill="#00E8F0"/>
<rect x="920" y="474" width="1" height="1" fill="#00E8F0"/>
<rect x="922" y="471" width="1" height="1" fill="#00E8F0"/>
<rect x="923" y="450" width="1" height="1" fill="#00E8F0"/>
<rect x="926" y="473" width="1" height="1" fill="#00E8F0"/>
<rect x="928" y="452" width="1" height="1" fill="#00E8F0"/>
<rect x="932" y="453" width="1" height="1" fill="#00E8F0"/>
<rect x="932" y="474" width="1" height="1" fill="#00E8F0"/>
<rect x="933" y="448" width="1" height="1" fill="#00E8F0"/>
<rect x="935" y="474" width="1" height="1" fill="#00E8F0"/>
<rect x="936" y="478" width="1" height="1" fill="#00E8F0"/>
<rect x="937" y="443" width="1" height="1" fill="#00E8F0"/>
<rect x="938" y="447" width="1" height="1" fill="#00E8F0"/>
<rect x="938" y="476" width="1" height="1" fill="#00E8F0"/>
<rect x="939" y="448" width="1" height="1" fill="#00E8F0"/>
<rect x="940" y="436" width="1" height="1" fill="#00E8F0"/>
<rect x="941" y="480" width="1" height="1" fill="#00E8F0"/>
<rect x="942" y="478" width="1" height="1" fill="#00E8F0"/>
<rect x="943" y="476" width="1" height="1" fill="#00E8F0"/>
<rect x="944" y="479" width="1" height="1" fill="#00E8F0"/>
<rect x="947" y="477" width="1" height="1" fill="#00E8F0"/>
<rect x="948" y="479" width="1" height="1" fill="#00E8F0"/>
<rect x="949" y="445" width="1" height="1" fill="#00E8F0"/>
<rect x="950" y="452" width="1" height="1" fill="#00E8F0"/>
<rect x="953" y="451" width="1" height="1" fill="#00E8F0"/>
<rect x="958" y="450" width="1" height="1" fill="#00E8F0"/>
<rect x="959" y="450" width="1" height="1" fill="#00E8F0"/>
<rect x="960" y="483" width="1" height="1" fill="#00E8F0"/>
<rect x="961" y="480" width="1" height="1" fill="#00E8F0"/>
<rect x="962" y="455" width="1" height="1" fill="#00E8F0"/>
<rect x="964" y="441" width="1" height="1" fill="#00E8F0"/>
<rect x="965" y="483" width="1" height="1" fill="#00E8F0"/>
<rect x="968" y="481" width="1" height="1" fill="#00E8F0"/>
<rect x="971" y="452" width="1" height="1" fill="#00E8F0"/>
<rect x="973" y="482" width="1" height="1" fill="#00E8F0"/>
<rect x="974" y="452" width="1" height="1" fill="#00E8F0"/>
<rect x="977" y="454" width="1" height="1" fill="#00E8F0"/>
<rect x="979" y="486" width="1" height="1" fill="#00E8F0"/>
<rect x="980" y="455" width="1" height="1" fill="#00E8F0"/>
<rect x="983" y="482" width="1" height="1" fill="#00E8F0"/>
<rect x="984" y="458" width="1" height="1" fill="#00E8F0"/>
<rect x="989" y="442" width="1" height="1" fill="#00E8F0"/>
<rect x="990" y="454" width="1" height="1" fill="#00E8F0"/>
<rect x="992" y="488" width="1" height="1" fill="#00E8F0"/>
<rect x="993" y="444" width="1" height="1" fill="#00E8F0"/>
<rect x="995" y="488" width="1" height="1" fill="#00E8F0"/>
<rect x="997" y="455" width="1" height="1" fill="#00E8F0"/>
<rect x="998" y="485" width="1" height="1" fill="#00E8F0"/>
<rect x="999" y="455" width="1" height="1" fill="#00E8F0"/>
<rect x="1002" y="453" width="1" height="1" fill="#00E8F0"/>
<rect x="1003" y="486" width="1" height="1" fill="#00E8F0"/>
<rect x="1004" y="460" width="1" height="1" fill="#00E8F0"/>
<rect x="1006" y="457" width="1" height="1" fill="#00E8F0"/>
<rect x="1009" y="461" width="1" height="1" fill="#00E8F0"/>
<rect x="1010" y="459" width="1" height="1" fill="#00E8F0"/>
<rect x="1012" y="491" width="1" height="1" fill="#00E8F0"/>
<rect x="1013" y="486" width="1" height="1" fill="#00E8F0"/>
<rect x="1016" y="462" width="1" height="1" fill="#00E8F0"/>
<rect x="1021" y="460" width="1" height="1" fill="#00E8F0"/>
<rect x="1024" y="493" width="1" height="1" fill="#00E8F0"/>
<rect x="1025" y="491" width="1" height="1" fill="#00E8F0"/>
<rect x="1026" y="490" width="1" height="1" fill="#00E8F0"/>
<rect x="1027" y="488" width="1" height="1" fill="#00E8F0"/>
<rect x="1028" y="490" width="1" height="1" fill="#00E8F0"/>
<rect x="1030" y="489" width="1" height="1" fill="#00E8F0"/>
<rect x="1031" y="491" width="1" height="1" fill="#00E8F0"/>
<rect x="1035" y="489" width="1" height="1" fill="#00E8F0"/>
<rect x="1041" y="465" width="1" height="1" fill="#00E8F0"/>
<rect x="1043" y="465" width="1" height="1" fill="#00E8F0"/>
<rect x="1044" y="494" width="1" height="1" fill="#00E8F0"/>
<rect x="1045" y="465" width="1" height="1" fill="#00E8F0"/>
<rect x="1046" y="463" width="1" height="1" fill="#00E8F0"/>
<rect x="1047" y="465" width="1" height="1" fill="#00E8F0"/>
<rect x="1048" y="493" width="1" height="1" fill="#00E8F0"/>
<rect x="1049" y="492" width="1" height="1" fill="#00E8F0"/>
<rect x="1050" y="451" width="1" height="1" fill="#00E8F0"/>
<rect x="1050" y="492" width="1" height="1" fill="#00E8F0"/>
<rect x="1051" y="463" width="1" height="1" fill="#00E8F0"/>
<rect x="1054" y="491" width="1" height="1" fill="#00E8F0"/>
<rect x="1055" y="460" width="1" height="1" fill="#00E8F0"/>
<rect x="1056" y="461" width="1" height="1" fill="#00E8F0"/>
<rect x="1057" y="457" width="1" height="1" fill="#00E8F0"/>
<rect x="1057" y="496" width="1" height="1" fill="#00E8F0"/>
<rect x="1058" y="465" width="1" height="1" fill="#00E8F0"/>
<rect x="1059" y="465" width="1" height="1" fill="#00E8F0"/>
<rect x="1059" y="494" width="1" height="1" fill="#00E8F0"/>
<rect x="1061" y="492" width="1" height="1" fill="#00E8F0"/>
<rect x="1063" y="469" width="1" height="1" fill="#00E8F0"/>
<rect x="1066" y="462" width="1" height="1" fill="#00E8F0"/>
<rect x="1068" y="494" width="1" height="1" fill="#00E8F0"/>
<rect x="1069" y="493" width="1" height="1" fill="#00E8F0"/>
<rect x="1070" y="465" width="1" height="1" fill="#00E8F0"/>
<rect x="1072" y="467" width="1" height="1" fill="#00E8F0"/>
<rect x="1074" y="461" width="1" height="1" fill="#00E8F0"/>
<rect x="1075" y="491" width="1" height="1" fill="#00E8F0"/>
<rect x="1077" y="470" width="1" height="1" fill="#00E8F0"/>
<rect x="1077" y="484" width="1" height="1" fill="#00E8F0"/>
<rect x="1078" y="465" width="1" height="1" fill="#00E8F0"/>
<rect x="1084" y="482" width="1" height="1" fill="#00E8F0"/>
<rect x="1086" y="470" width="1" height="1" fill="#00E8F0"/>
<rect x="1086" y="483" width="1" height="1" fill="#00E8F0"/>
<rect x="1087" y="485" width="1" height="1" fill="#00E8F0"/>
<rect x="1088" y="467" width="1" height="1" fill="#00E8F0"/>
<rect x="1089" y="490" width="1" height="1" fill="#00E8F0"/>
<rect x="1091" y="495" width="1" height="1" fill="#00E8F0"/>
<rect x="1092" y="496" width="1" height="1" fill="#00E8F0"/>
<rect x="1094" y="473" width="1" height="1" fill="#00E8F0"/>
<rect x="1095" y="492" width="1" height="1" fill="#00E8F0"/>
<rect x="1098" y="474" width="1" height="1" fill="#00E8F0"/>
<rect x="1099" y="472" width="1" height="1" fill="#00E8F0"/>
<rect x="1101" y="458" width="1" height="1" fill="#00E8F0"/>
<rect x="1101" y="495" width="1" height="1" fill="#00E8F0"/>
<rect x="1102" y="470" width="1" height="1" fill="#00E8F0"/>
<rect x="1102" y="497" width="1" height="1" fill="#00E8F0"/>
<rect x="1108" y="492" width="1" height="1" fill="#00E8F0"/>
<rect x="1111" y="473" width="1" height="1" fill="#00E8F0"/>
<rect x="1111" y="497" width="1" height="1" fill="#00E8F0"/>
<rect x="1114" y="455" width="1" height="1" fill="#00E8F0"/>
<rect x="1115" y="471" width="1" height="1" fill="#00E8F0"/>
<rect x="1116" y="475" width="1" height="1" fill="#00E8F0"/>
<rect x="1116" y="496" width="1" height="1" fill="#00E8F0"/>
<rect x="1117" y="498" width="1" height="1" fill="#00E8F0"/>
<rect x="1119" y="473" width="1" height="1" fill="#00E8F0"/>
<rect x="1119" y="494" width="1" height="1" fill="#00E8F0"/>
<rect x="1121" y="472" width="1" height="1" fill="#00E8F0"/>
<rect x="1122" y="470" width="1" height="1" fill="#00E8F0"/>
<rect x="1122" y="496" width="1" height="1" fill="#00E8F0"/>
<rect x="1124" y="469" width="1" height="1" fill="#00E8F0"/>
<rect x="1127" y="496" width="1" height="1" fill="#00E8F0"/>
<rect x="1135" y="470" width="1" height="1" fill="#00E8F0"/>
<rect x="1138" y="475" width="1" height="1" fill="#00E8F0"/>
<rect x="1138" y="498" width="1" height="1" fill="#00E8F0"/>
<rect x="1139" y="499" width="1" height="1" fill="#00E8F0"/>
<rect x="1146" y="488" width="1" height="1" fill="#00E8F0"/>
<rect x="684" y="418" width="1" height="1" fill="#00E8F0"/>
<rect x="694" y="425" width="1" height="1" fill="#00E8F0"/>
<rect x="700" y="429" width="1" height="1" fill="#00E8F0"/>
<rect x="704" y="428" width="1" height="1" fill="#00E8F0"/>
<rect x="716" y="430" width="1" height="1" fill="#00E8F0"/>
<rect x="728" y="392" width="1" height="1" fill="#00E8F0"/>
<rect x="734" y="418" width="1" height="1" fill="#00E8F0"/>
<rect x="741" y="424" width="1" height="1" fill="#00E8F0"/>
<rect x="750" y="420" width="1" height="1" fill="#00E8F0"/>
<rect x="759" y="379" width="1" height="1" fill="#00E8F0"/>
<rect x="781" y="403" width="1" height="1" fill="#00E8F0"/>
<rect x="798" y="403" width="1" height="1" fill="#00E8F0"/>
<rect x="812" y="414" width="1" height="1" fill="#00E8F0"/>
<rect x="824" y="415" width="1" height="1" fill="#00E8F0"/>
<rect x="834" y="414" width="1" height="1" fill="#00E8F0"/>
<rect x="843" y="413" width="1" height="1" fill="#00E8F0"/>
<rect x="851" y="426" width="1" height="1" fill="#00E8F0"/>
<rect x="871" y="417" width="1" height="1" fill="#00E8F0"/>
<rect x="878" y="426" width="1" height="1" fill="#00E8F0"/>
<rect x="882" y="419" width="1" height="1" fill="#00E8F0"/>
<rect x="887" y="426" width="1" height="1" fill="#00E8F0"/>
<rect x="892" y="428" width="1" height="1" fill="#00E8F0"/>
<rect x="900" y="423" width="1" height="1" fill="#00E8F0"/>
<rect x="904" y="425" width="1" height="1" fill="#00E8F0"/>
<rect x="918" y="429" width="1" height="1" fill="#00E8F0"/>
<rect x="920" y="427" width="1" height="1" fill="#00E8F0"/>
<rect x="930" y="430" width="1" height="1" fill="#00E8F0"/>
<rect x="935" y="434" width="1" height="1" fill="#00E8F0"/>
<rect x="940" y="433" width="1" height="1" fill="#00E8F0"/>
<rect x="948" y="432" width="1" height="1" fill="#00E8F0"/>
<rect x="955" y="433" width="1" height="1" fill="#00E8F0"/>
<rect x="1036" y="436" width="1" height="1" fill="#00E8F0"/>
<rect x="1080" y="258" width="1" height="1" fill="#00E8F0"/>
<rect x="1081" y="416" width="1" height="1" fill="#00E8F0"/>
<rect x="1089" y="450" width="1" height="1" fill="#00E8F0"/>
<rect x="1115" y="446" width="1" height="1" fill="#00E8F0"/>
<rect x="1130" y="457" width="1" height="1" fill="#00E8F0"/>
<rect x="1133" y="443" width="1" height="1" fill="#00E8F0"/>
<rect x="1138" y="409" width="1" height="1" fill="#00E8F0"/>
<rect x="1149" y="218" width="1" height="1" fill="#000"/>
<rect x="1149" y="222" width="1" height="1" fill="#000"/>
<rect x="1149" y="227" width="1" height="1" fill="#000"/>
<rect x="1149" y="231" width="1" height="1" fill="#000"/>
<rect x="1149" y="235" width="1" height="1" fill="#000"/>
<rect x="1149" y="240" width="1" height="1" fill="#000"/>
<rect x="1149" y="244" width="1" height="1" fill="#000"/>
<rect x="1149" y="249" width="1" height="1" fill="#000"/>
<rect x="1149" y="253" width="1" height="1" fill="#000"/>
<rect x="1149" y="257" width="1" height="1" fill="#000"/>
<rect x="1149" y="262" width="1" height="1" fill="#000"/>
<rect x="1149" y="266" width="1" height="1" fill="#000"/>
<rect x="1149" y="271" width="1" height="1" fill="#000"/>
<rect x="1149" y="275" width="1" height="1" fill="#000"/>
<rect x="1149" y="279" width="1" height="1" fill="#000"/>
<rect x="1149" y="284" width="1" height="1" fill="#000"/>
<rect x="1149" y="288" width="1" height="1" fill="#000"/>
<rect x="1149" y="293" width="1" height="1" fill="#000"/>
<rect x="1149" y="297" width="1" height="1" fill="#000"/>
<rect x="1149" y="301" width="1" height="1" fill="#000"/>
<rect x="1149" y="306" width="1" height="1" fill="#000"/>
<rect x="1149" y="310" width="1" height="1" fill="#000"/>
<rect x="1149" y="315" width="1" height="1" fill="#000"/>
<rect x="1149" y="319" width="1" height="1" fill="#000"/>
<rect x="1149" y="323" width="1" height="1" fill="#000"/>
<rect x="1149" y="328" width="1" height="1" fill="#000"/>
<rect x="1149" y="332" width="1" height="1" fill="#000"/>
<rect x="1149" y="337" width="1" height="1" fill="#000"/>
<rect x="1149" y="341" width="1" height="1" fill="#000"/>
<rect x="1149" y="345" width="1" height="1" fill="#000"/>
<rect x="1149" y="350" width="1" height="1" fill="#000"/>
<rect x="1149" y="354" width="1" height="1" fill="#000"/>
<rect x="1149" y="359" width="1" height="1" fill="#000"/>
<rect x="1149" y="363" width="1" height="1" fill="#000"/>
<rect x="1149" y="367" width="1" height="1" fill="#000"/>
<rect x="1149" y="372" width="1" height="1" fill="#000"/>
<rect x="1149" y="376" width="1" height="1" fill="#000"/>
<rect x="1149" y="381" width="1" height="1" fill="#000"/>
<rect x="1149" y="385" width="1" height="1" fill="#000"/>
<rect x="1149" y="389" width="1" height="1" fill="#000"/>
<rect x="1149" y="394" width="1" height="1" fill="#000"/>
<rect x="1149" y="398" width="1" height="1" fill="#000"/>
<rect x="1149" y="403" width="1" height="1" fill="#000"/>
<rect x="1149" y="407" width="1" height="1" fill="#000"/>
<rect x="1149" y="411" width="1" height="1" fill="#000"/>
<rect x="1149" y="416" width="1" height="1" fill="#000"/>
<rect x="1149" y="420" width="1" height="1" fill="#000"/>
<rect x="1149" y="425" width="1" height="1" fill="#000"/>
<rect x="1149" y="429" width="1" height="1" fill="#000"/>
<rect x="1149" y="433" width="1" height="1" fill="#000"/>
<rect x="1149" y="438" width="1" height="1" fill="#000"/>
<rect x="1149" y="442" width="1" height="1" fill="#000"/>
<rect x="1149" y="447" width="1" height="1" fill="#000"/>
<rect x="1149" y="451" width="1" height="1" fill="#000"/>
<rect x="1149" y="455" width="1" height="1" fill="#000"/>
<rect x="1149" y="460" width="1" height="1" fill="#000"/>
<rect x="1149" y="464" width="1" height="1" fill="#000"/>
<rect x="1149" y="469" width="1" height="1" fill="#000"/>
<rect x="1149" y="473" width="1" height="1" fill="#000"/>
<rect x="1149" y="477" width="1" height="1" fill="#000"/>
<rect x="1149" y="482" width="1" height="1" fill="#000"/>
<rect x="1149" y="486" width="1" height="1" fill="#000"/>
<rect x="1149" y="491" width="1" height="1" fill="#000"/>
<rect x="1149" y="495" width="1" height="1" fill="#000"/>
<rect x="1149" y="499" width="1" height="1" fill="#000"/>
<rect x="1149" y="504" width="1" height="1" fill="#000"/>
<rect x="1149" y="218" width="3" height="1" fill="#000"/>
<text x="1153.5" y="225" font-size="10" fill="#000" text-anchor="start" font-weight="normal" textLength="11.25" lengthAdjust="spacingAndGlyphs" stroke="#000" stroke-width="0.3">dB</text>
<rect x="1149" y="244" width="3" height="1" fill="#000"/>
<text x="1153.5" y="247.4" font-size="10" fill="#000" text-anchor="start" font-weight="normal" textLength="5.12" lengthAdjust="spacingAndGlyphs" stroke="#000" stroke-width="0.3">0</text>
<rect x="1149" y="270" width="3" height="1" fill="#000"/>
<text x="1153.5" y="273.4" font-size="10" fill="#000" text-anchor="start" font-weight="normal" textLength="13.30" lengthAdjust="spacingAndGlyphs" stroke="#000" stroke-width="0.3">-12</text>
<rect x="1149" y="297" width="3" height="1" fill="#000"/>
<text x="1153.5" y="300.4" font-size="10" fill="#000" text-anchor="start" font-weight="normal" textLength="13.30" lengthAdjust="spacingAndGlyphs" stroke="#000" stroke-width="0.3">-24</text>
<rect x="1149" y="323" width="3" height="1" fill="#000"/>
<text x="1153.5" y="326.4" font-size="10" fill="#000" text-anchor="start" font-weight="normal" textLength="13.30" lengthAdjust="spacingAndGlyphs" stroke="#000" stroke-width="0.3">-36</text>
<rect x="1149" y="350" width="3" height="1" fill="#000"/>
<text x="1153.5" y="353.4" font-size="10" fill="#000" text-anchor="start" font-weight="normal" textLength="13.30" lengthAdjust="spacingAndGlyphs" stroke="#000" stroke-width="0.3">-48</text>
<rect x="1149" y="376" width="3" height="1" fill="#000"/>
<text x="1153.5" y="379.4" font-size="10" fill="#000" text-anchor="start" font-weight="normal" textLength="13.30" lengthAdjust="spacingAndGlyphs" stroke="#000" stroke-width="0.3">-60</text>
<rect x="1149" y="402" width="3" height="1" fill="#000"/>
<text x="1153.5" y="405.4" font-size="10" fill="#000" text-anchor="start" font-weight="normal" textLength="13.30" lengthAdjust="spacingAndGlyphs" stroke="#000" stroke-width="0.3">-72</text>
<rect x="1149" y="429" width="3" height="1" fill="#000"/>
<text x="1153.5" y="432.4" font-size="10" fill="#000" text-anchor="start" font-weight="normal" textLength="13.30" lengthAdjust="spacingAndGlyphs" stroke="#000" stroke-width="0.3">-84</text>
<rect x="1149" y="455" width="3" height="1" fill="#000"/>
<text x="1153.5" y="458.4" font-size="10" fill="#000" text-anchor="start" font-weight="normal" textLength="13.30" lengthAdjust="spacingAndGlyphs" stroke="#000" stroke-width="0.3">-96</text>
<rect x="1149" y="482" width="3" height="1" fill="#000"/>
<text x="1153.5" y="485.4" font-size="10" fill="#000" text-anchor="start" font-weight="normal" textLength="18.41" lengthAdjust="spacingAndGlyphs" stroke="#000" stroke-width="0.3">-108</text>
<rect x="553" y="506" width="1" height="2" fill="#000"/>
<rect x="565" y="506" width="1" height="2" fill="#000"/>
<rect x="577" y="506" width="1" height="4" fill="#000"/>
<rect x="592" y="506" width="1" height="2" fill="#000"/>
<rect x="606" y="506" width="1" height="2" fill="#000"/>
<rect x="618" y="506" width="1" height="2" fill="#000"/>
<rect x="630" y="506" width="1" height="4" fill="#000"/>
<rect x="645" y="506" width="1" height="2" fill="#000"/>
<rect x="659" y="506" width="1" height="2" fill="#000"/>
<rect x="671" y="506" width="1" height="2" fill="#000"/>
<rect x="683" y="506" width="1" height="4" fill="#000"/>
<rect x="699" y="506" width="1" height="2" fill="#000"/>
<rect x="713" y="506" width="1" height="2" fill="#000"/>
<rect x="724" y="506" width="1" height="2" fill="#000"/>
<rect x="736" y="506" width="1" height="4" fill="#000"/>
<rect x="752" y="506" width="1" height="2" fill="#000"/>
<rect x="766" y="506" width="1" height="2" fill="#000"/>
<rect x="777" y="506" width="1" height="2" fill="#000"/>
<rect x="789" y="506" width="1" height="4" fill="#000"/>
<rect x="805" y="506" width="1" height="2" fill="#000"/>
<rect x="819" y="506" width="1" height="2" fill="#000"/>
<rect x="831" y="506" width="1" height="2" fill="#000"/>
<rect x="842" y="506" width="1" height="4" fill="#000"/>
<rect x="858" y="506" width="1" height="2" fill="#000"/>
<rect x="872" y="506" width="1" height="2" fill="#000"/>
<rect x="884" y="506" width="1" height="2" fill="#000"/>
<rect x="895" y="506" width="1" height="4" fill="#000"/>
<rect x="911" y="506" width="1" height="2" fill="#000"/>
<rect x="926" y="506" width="1" height="2" fill="#000"/>
<rect x="937" y="506" width="1" height="2" fill="#000"/>
<rect x="948" y="506" width="1" height="4" fill="#000"/>
<rect x="965" y="506" width="1" height="2" fill="#000"/>
<rect x="979" y="506" width="1" height="2" fill="#000"/>
<rect x="990" y="506" width="1" height="2" fill="#000"/>
<rect x="1001" y="506" width="1" height="4" fill="#000"/>
<rect x="1018" y="506" width="1" height="2" fill="#000"/>
<rect x="1032" y="506" width="1" height="2" fill="#000"/>
<rect x="1044" y="506" width="1" height="2" fill="#000"/>
<rect x="1054" y="506" width="1" height="4" fill="#000"/>
<rect x="1071" y="506" width="1" height="2" fill="#000"/>
<rect x="1085" y="506" width="1" height="2" fill="#000"/>
<rect x="1097" y="506" width="1" height="2" fill="#000"/>
<rect x="1107" y="506" width="1" height="4" fill="#000"/>
<rect x="1125" y="506" width="1" height="2" fill="#000"/>
<rect x="1139" y="506" width="1" height="2" fill="#000"/>
<text x="558.5" y="519" font-size="10" fill="#000" text-anchor="middle" font-weight="normal" textLength="11.00" lengthAdjust="spacingAndGlyphs" stroke="#000" stroke-width="0.3">Hz</text>
<text x="629.5" y="519" font-size="10" fill="#000" text-anchor="middle" font-weight="normal" textLength="17.51" lengthAdjust="spacingAndGlyphs" stroke="#000" stroke-width="0.3">27.5</text>
<text x="682.5" y="519" font-size="10" fill="#000" text-anchor="middle" font-weight="normal" textLength="10.01" lengthAdjust="spacingAndGlyphs" stroke="#000" stroke-width="0.3">55</text>
<text x="736" y="519" font-size="10" fill="#000" text-anchor="middle" font-weight="normal" textLength="14.35" lengthAdjust="spacingAndGlyphs" stroke="#000" stroke-width="0.3">110</text>
<text x="789" y="519" font-size="10" fill="#000" text-anchor="middle" font-weight="normal" textLength="15.01" lengthAdjust="spacingAndGlyphs" stroke="#000" stroke-width="0.3">220</text>
<text x="842" y="519" font-size="10" fill="#000" text-anchor="middle" font-weight="normal" textLength="15.01" lengthAdjust="spacingAndGlyphs" stroke="#000" stroke-width="0.3">440</text>
<text x="895" y="519" font-size="10" fill="#000" text-anchor="middle" font-weight="normal" textLength="15.01" lengthAdjust="spacingAndGlyphs" stroke="#000" stroke-width="0.3">880</text>
<text x="948" y="519" font-size="10" fill="#000" text-anchor="middle" font-weight="normal" textLength="20.02" lengthAdjust="spacingAndGlyphs" stroke="#000" stroke-width="0.3">1760</text>
<text x="1001" y="519" font-size="10" fill="#000" text-anchor="middle" font-weight="normal" textLength="20.02" lengthAdjust="spacingAndGlyphs" stroke="#000" stroke-width="0.3">3520</text>
<text x="1054" y="519" font-size="10" fill="#000" text-anchor="middle" font-weight="normal" textLength="20.02" lengthAdjust="spacingAndGlyphs" stroke="#000" stroke-width="0.3">7040</text>
<text x="1107" y="519" font-size="10" fill="#000" text-anchor="middle" font-weight="normal" textLength="25.02" lengthAdjust="spacingAndGlyphs" stroke="#000" stroke-width="0.3">14080</text>
<text x="606.5" y="541" font-size="11" fill="#000" text-anchor="end" font-weight="normal">Cursor:</text>
<rect x="609" y="530" width="364" height="15" fill="#FFFFFF"/>
<rect x="609" y="530" width="363" height="14" fill="#ACA899"/>
<rect x="610" y="531" width="362" height="13" fill="#ECE9D8"/>
<text x="615" y="541" font-size="11" fill="#000" text-anchor="start" font-weight="normal" textLength="168.99" lengthAdjust="spacingAndGlyphs">9.99 Hz, L=-75.18 dB, R=-75.22 dB</text>
<text x="606.5" y="562" font-size="11" fill="#000" text-anchor="end" font-weight="normal">Frequency:</text>
<rect x="609" y="551" width="364" height="15" fill="#FFFFFF"/>
<rect x="609" y="551" width="363" height="14" fill="#ACA899"/>
<rect x="610" y="552" width="362" height="13" fill="#ECE9D8"/>
<text x="612" y="562" font-size="11" fill="#000" text-anchor="start" font-weight="normal" textLength="227.10" lengthAdjust="spacingAndGlyphs">L= 9986.1 Hz (D#9 +5), R= 9986.1 Hz (D#9 +5)</text>
<text x="606.5" y="585" font-size="11" fill="#000" text-anchor="end" font-weight="normal" textLength="44.62" lengthAdjust="spacingAndGlyphs">FFT Size:</text>
<rect x="609" y="573" width="64" height="20" fill="#FFFFFF"/>
<rect x="609" y="573" width="63" height="19" fill="#ACA899"/>
<rect x="610" y="574" width="62" height="18" fill="#F1EFE2"/>
<rect x="610" y="574" width="61" height="17" fill="#716F64"/>
<rect x="611" y="575" width="60" height="16" fill="#FFFFFF"/>
<rect x="654" y="575" width="17" height="16" fill="#716F64"/>
<rect x="654" y="575" width="16" height="15" fill="#F1EFE2"/>
<rect x="655" y="576" width="15" height="14" fill="#ACA899"/>
<rect x="655" y="576" width="14" height="13" fill="#FFFFFF"/>
<rect x="656" y="577" width="13" height="12" fill="#ECE9D8"/>
<polygon shape-rendering="geometricPrecision" points="658.5,581 665.5,581 662,584.5" fill="#000"/>
<text x="613" y="587" font-size="11" fill="#000" text-anchor="start" font-weight="normal">65536</text>
<rect x="678" y="573" width="112" height="20" fill="#FFFFFF"/>
<rect x="678" y="573" width="111" height="19" fill="#ACA899"/>
<rect x="679" y="574" width="110" height="18" fill="#F1EFE2"/>
<rect x="679" y="574" width="109" height="17" fill="#716F64"/>
<rect x="680" y="575" width="108" height="16" fill="#FFFFFF"/>
<rect x="771" y="575" width="17" height="16" fill="#716F64"/>
<rect x="771" y="575" width="16" height="15" fill="#F1EFE2"/>
<rect x="772" y="576" width="15" height="14" fill="#ACA899"/>
<rect x="772" y="576" width="14" height="13" fill="#FFFFFF"/>
<rect x="773" y="577" width="13" height="12" fill="#ECE9D8"/>
<polygon shape-rendering="geometricPrecision" points="775.5,581 782.5,581 779,584.5" fill="#000"/>
<text x="682" y="587" font-size="11" fill="#000" text-anchor="start" font-weight="normal">Hanning</text>
<rect x="981" y="530" width="1" height="62" fill="#ACA899"/>
<rect x="982" y="530" width="1" height="62" fill="#FFFFFF"/>
<rect x="988" y="531" width="13" height="13" fill="#FFFFFF"/>
<rect x="988" y="531" width="12" height="12" fill="#ACA899"/>
<rect x="989" y="532" width="11" height="11" fill="#F1EFE2"/>
<rect x="989" y="532" width="10" height="10" fill="#716F64"/>
<rect x="990" y="533" width="9" height="9" fill="#FFFFFF"/>
<text x="1006" y="542" font-size="11" fill="#000" text-anchor="start" font-weight="normal">Linear View</text>
<text x="1038" y="563" font-size="11" fill="#000" text-anchor="end" font-weight="normal">Range</text>
<text x="1038" y="586" font-size="11" fill="#000" text-anchor="end" font-weight="normal">Reference</text>
<rect x="1044" y="550" width="35" height="20" fill="#FFFFFF"/>
<rect x="1044" y="550" width="34" height="19" fill="#ACA899"/>
<rect x="1045" y="551" width="33" height="18" fill="#F1EFE2"/>
<rect x="1045" y="551" width="32" height="17" fill="#716F64"/>
<rect x="1046" y="552" width="31" height="16" fill="#FFFFFF"/>
<text x="1047" y="564" font-size="11" fill="#000" text-anchor="start" font-weight="normal">130</text>
<rect x="1044" y="573" width="35" height="20" fill="#FFFFFF"/>
<rect x="1044" y="573" width="34" height="19" fill="#ACA899"/>
<rect x="1045" y="574" width="33" height="18" fill="#F1EFE2"/>
<rect x="1045" y="574" width="32" height="17" fill="#716F64"/>
<rect x="1046" y="575" width="31" height="16" fill="#FFFFFF"/>
<text x="1047" y="587" font-size="11" fill="#000" text-anchor="start" font-weight="normal">0</text>
<text x="1083" y="563" font-size="11" fill="#000" text-anchor="start" font-weight="normal">dB</text>
<text x="1083" y="586" font-size="11" fill="#000" text-anchor="start" font-weight="normal">dBFS</text>
<rect x="1119" y="525" width="53" height="20" fill="#716F64"/>
<rect x="1119" y="525" width="52" height="19" fill="#FFFFFF"/>
<rect x="1120" y="526" width="51" height="18" fill="#ACA899"/>
<rect x="1120" y="526" width="50" height="17" fill="#F6F5EE"/>
<rect x="1121" y="527" width="49" height="16" fill="#ECE9D8"/>
<text x="1145.5" y="539" font-size="11" fill="#000" text-anchor="middle" font-weight="normal">Scan</text>
<rect x="1119" y="549" width="53" height="20" fill="#716F64"/>
<rect x="1119" y="549" width="52" height="19" fill="#FFFFFF"/>
<rect x="1120" y="550" width="51" height="18" fill="#ACA899"/>
<rect x="1120" y="550" width="50" height="17" fill="#F6F5EE"/>
<rect x="1121" y="551" width="49" height="16" fill="#ECE9D8"/>
<text x="1145.5" y="563" font-size="11" fill="#000" text-anchor="middle" font-weight="normal">Close</text>
<rect x="1119" y="573" width="53" height="20" fill="#716F64"/>
<rect x="1119" y="573" width="52" height="19" fill="#FFFFFF"/>
<rect x="1120" y="574" width="51" height="18" fill="#ACA899"/>
<rect x="1120" y="574" width="50" height="17" fill="#F6F5EE"/>
<rect x="1121" y="575" width="49" height="16" fill="#ECE9D8"/>
<text x="1145.5" y="587" font-size="11" fill="#000" text-anchor="middle" font-weight="normal">Help</text>
</svg>
</body></html>
